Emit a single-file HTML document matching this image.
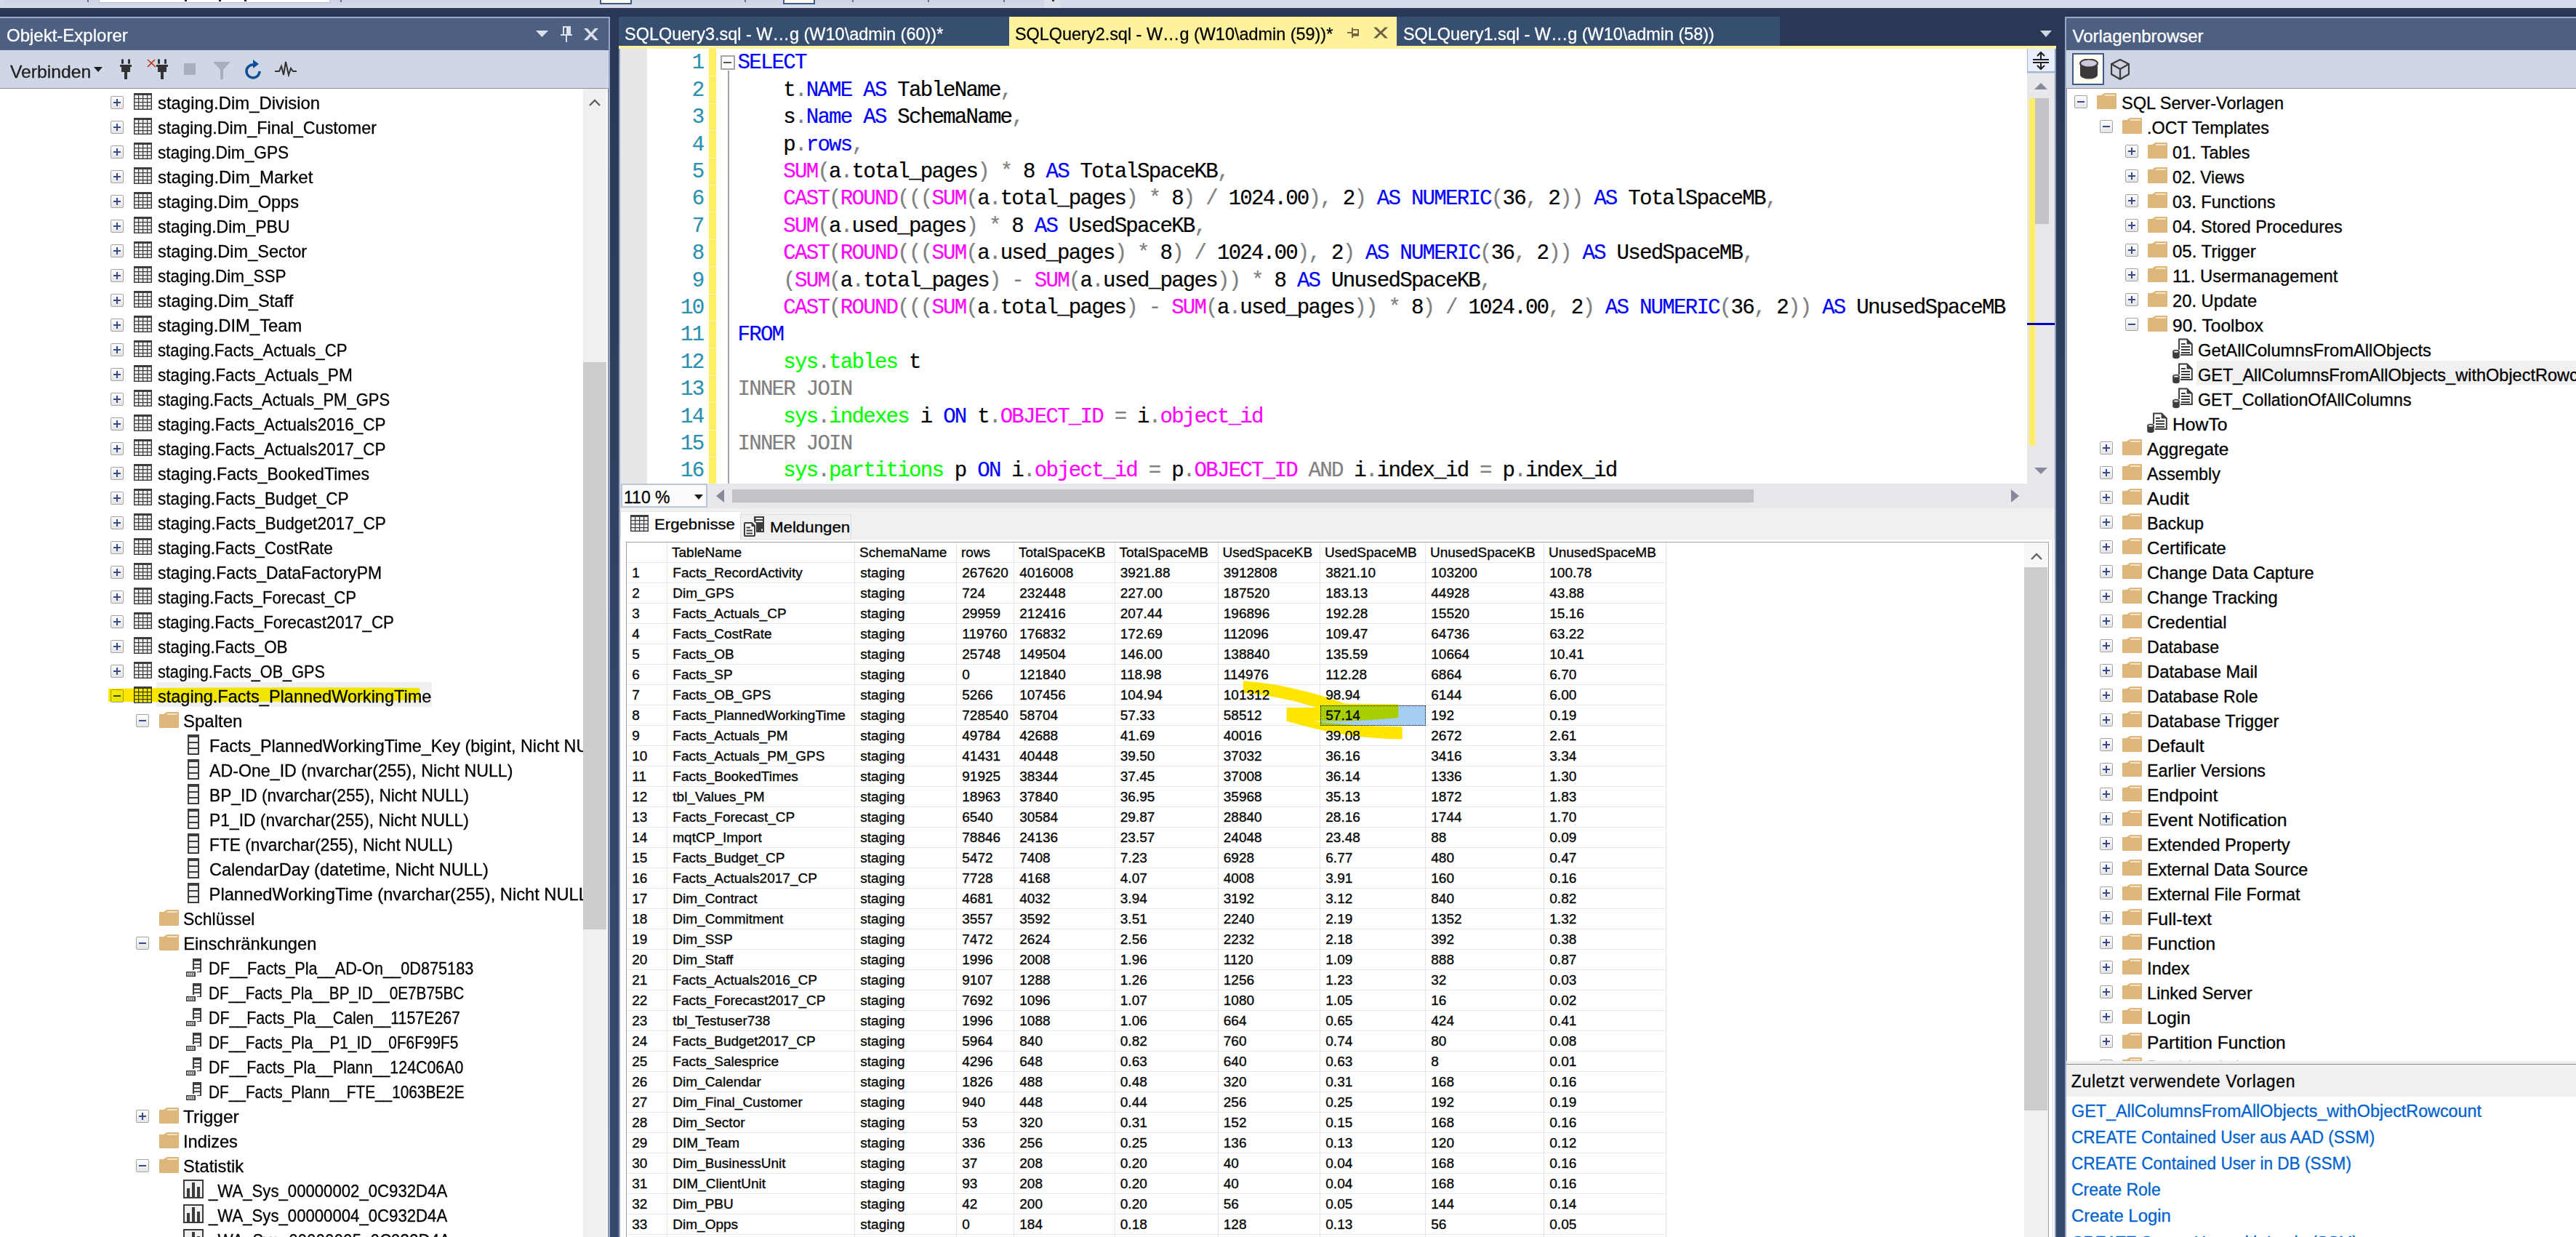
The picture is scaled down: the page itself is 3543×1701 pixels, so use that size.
<!DOCTYPE html><html><head><meta charset="utf-8"><style>
html,body{margin:0;padding:0;}
html,body{width:3543px;height:1701px;overflow:hidden;background:#293955;}
#root{position:relative;left:0;top:0;width:3543px;height:1701px;overflow:hidden;background:#293955;}
div,svg{position:absolute;}
.S{font-family:"Liberation Sans",sans-serif;white-space:pre;-webkit-text-stroke:0.3px currentColor;}
.M{font-family:"Liberation Mono",monospace;white-space:pre;-webkit-text-stroke:0.2px currentColor;}
</style></head><body><div id="root">
<div style="left:0px;top:0px;width:3543px;height:11px;background:#d5dbe8;"></div>
<div style="left:6px;top:0px;width:1430px;height:7px;background:#cfd6e5;"></div>
<div style="left:1436px;top:0px;width:22px;height:11px;background:#dde1ea;"></div>
<div style="left:1447px;top:0px;width:3px;height:2px;background:#333333;"></div>
<div style="left:136px;top:0px;width:316px;height:3px;background:#ffffff;border:1px solid #b9c2d6;border-top:none;"></div>
<div style="left:254px;top:0px;width:3px;height:2px;background:#1e1e1e;"></div>
<div style="left:301px;top:0px;width:3px;height:2px;background:#1e1e1e;"></div>
<div style="left:336px;top:0px;width:3px;height:2px;background:#1e1e1e;"></div>
<div style="left:120px;top:0px;width:2px;height:3px;background:#6d7486;"></div>
<div style="left:468px;top:0px;width:2px;height:3px;background:#6d7486;"></div>
<div style="left:1024px;top:0px;width:2px;height:3px;background:#6d7486;"></div>
<div style="left:1172px;top:0px;width:2px;height:3px;background:#6d7486;"></div>
<div style="left:1276px;top:0px;width:2px;height:3px;background:#6d7486;"></div>
<div style="left:1380px;top:0px;width:2px;height:3px;background:#6d7486;"></div>
<div style="left:825px;top:0px;width:40px;height:4px;background:#fffcf4;border:2px solid #3d5a8a;border-top:none;"></div>
<div style="left:1077px;top:0px;width:40px;height:4px;background:#fffcf4;border:2px solid #3d5a8a;border-top:none;"></div>
<div style="left:0px;top:23px;width:839px;height:1678px;background:#9aa6c8;"></div>
<div style="left:0px;top:25px;width:837px;height:44px;background:#4d6082;"></div>
<div class="S " style="left:9.0px;top:36.3px;font-size:24px;line-height:26.81px;color:#ffffff;">Objekt-Explorer</div>
<svg style="left:737px;top:42px;" width="17" height="9" viewBox="0 0 17 9"><path d="M0 0H17L8.5 9Z" fill="#dde1ea"/></svg>
<svg style="left:771px;top:35px;" width="16" height="24" viewBox="0 0 16 24"><path d="M3 1H14V13H3Z M5 3V12H8V3Z" fill="#dde1ea" fill-rule="evenodd"/><rect x="0" y="12" width="16" height="2" fill="#dde1ea"/><rect x="7" y="13" width="2" height="10" fill="#dde1ea"/></svg>
<svg style="left:802px;top:38px;" width="22" height="18" viewBox="0 0 22 18"><path d="M1 1H6L11 7L16 1H21L13.5 9L21 17.3H16L11 11.5L6 17.3H1L8.5 9Z" fill="#dde1ea"/></svg>
<div style="left:0px;top:69px;width:837px;height:52px;background:#cfd6e5;"></div>
<div class="S " style="left:14.0px;top:85.6px;font-size:24px;line-height:26.81px;color:#1e1e1e;transform:scaleX(1.03);transform-origin:0 0;">Verbinden</div>
<svg style="left:129px;top:92px;" width="12" height="8" viewBox="0 0 12 8"><path d="M0 0H12L6 7Z" fill="#1e1e1e"/></svg>
<svg style="left:165px;top:81px;" width="16" height="28" viewBox="0 0 16 28"><rect x="2" y="0" width="3" height="7" rx="1.5" fill="#333"/><rect x="11" y="0" width="3" height="7" rx="1.5" fill="#333"/><rect x="0" y="8" width="16" height="3" fill="#333"/><rect x="2" y="10" width="12" height="8" fill="#333"/><rect x="6" y="17" width="4" height="11" fill="#333"/></svg>
<svg style="left:202px;top:81px;" width="29" height="28" viewBox="0 0 29 28"><path d="M1 11L11 1M1 1L12 11" stroke="#c0300a" stroke-width="1.6"/><g transform="translate(13,0)"><rect x="2" y="0" width="3" height="7" rx="1.5" fill="#333"/><rect x="11" y="0" width="3" height="7" rx="1.5" fill="#333"/><rect x="0" y="8" width="16" height="3" fill="#333"/><rect x="2" y="10" width="12" height="8" fill="#333"/><rect x="6" y="17" width="4" height="11" fill="#333"/></g></svg>
<div style="left:253px;top:87px;width:16px;height:16px;background:#a8aebb;"></div>
<svg style="left:293px;top:85px;" width="24" height="24" viewBox="0 0 24 24"><path d="M0 0H24L14 11V24H10V11Z" fill="#a8aebb"/></svg>
<svg style="left:336px;top:81px;" width="26" height="29" viewBox="0 0 26 29"><path d="M21 17A9 9 0 1 1 13 8" fill="none" stroke="#0e4f96" stroke-width="3.6"/><path d="M12 1L20 7L12 13Z" fill="#0e4f96"/></svg>
<svg style="left:378px;top:84px;" width="30" height="22" viewBox="0 0 30 22"><path d="M0 14H6L9 7L12 19L15 1L19 19L22 10L25 14H30" fill="none" stroke="#333" stroke-width="2"/></svg>
<div style="left:0px;top:121px;width:837px;height:1px;background:#8c8f99;"></div>
<div style="left:0px;top:122px;width:802px;height:1579px;background:#ffffff;"></div>
<div style="left:802px;top:122px;width:33px;height:1579px;background:#f0f0f0;"></div>
<div style="left:803px;top:498px;width:31px;height:780px;background:#cdcdcd;"></div>
<svg style="left:810px;top:135px;" width="16" height="10" viewBox="0 0 16 10"><path d="M1 9L8 2L15 9" fill="none" stroke="#606060" stroke-width="2.4"/></svg>
<div style="left:152px;top:132px;width:16px;height:16px;border:1px solid #a3a3a3;border-radius:2px;background:linear-gradient(#fdfdfd,#e4e4e4);"></div>
<div style="left:156px;top:140px;width:10px;height:2px;background:#36498c;"></div>
<div style="left:160px;top:136px;width:2px;height:10px;background:#36498c;"></div>
<svg style="left:184px;top:128px;" width="25" height="23" viewBox="0 0 25 23"><rect x="0.7" y="0.7" width="23.6" height="21.6" fill="#f0f0f0" stroke="#3c3c3c" stroke-width="1.4"/><rect x="0" y="0" width="25" height="3" fill="#3c3c3c"/><rect x="6" y="2" width="1.2" height="21" fill="#3c3c3c"/><rect x="12" y="2" width="1.2" height="21" fill="#3c3c3c"/><rect x="18" y="2" width="1.2" height="21" fill="#3c3c3c"/><rect x="0" y="7" width="25" height="1.2" fill="#3c3c3c"/><rect x="0" y="12" width="25" height="1.2" fill="#3c3c3c"/><rect x="0" y="17" width="25" height="1.2" fill="#3c3c3c"/></svg>
<div class="S " style="left:217.3px;top:129.2px;font-size:23.7px;line-height:26.47px;color:#000000;transform:scaleX(1.0087);transform-origin:0 0;">staging.Dim_Division</div>
<div style="left:152px;top:166px;width:16px;height:16px;border:1px solid #a3a3a3;border-radius:2px;background:linear-gradient(#fdfdfd,#e4e4e4);"></div>
<div style="left:156px;top:174px;width:10px;height:2px;background:#36498c;"></div>
<div style="left:160px;top:170px;width:2px;height:10px;background:#36498c;"></div>
<svg style="left:184px;top:162px;" width="25" height="23" viewBox="0 0 25 23"><rect x="0.7" y="0.7" width="23.6" height="21.6" fill="#f0f0f0" stroke="#3c3c3c" stroke-width="1.4"/><rect x="0" y="0" width="25" height="3" fill="#3c3c3c"/><rect x="6" y="2" width="1.2" height="21" fill="#3c3c3c"/><rect x="12" y="2" width="1.2" height="21" fill="#3c3c3c"/><rect x="18" y="2" width="1.2" height="21" fill="#3c3c3c"/><rect x="0" y="7" width="25" height="1.2" fill="#3c3c3c"/><rect x="0" y="12" width="25" height="1.2" fill="#3c3c3c"/><rect x="0" y="17" width="25" height="1.2" fill="#3c3c3c"/></svg>
<div class="S " style="left:217.3px;top:163.2px;font-size:23.7px;line-height:26.47px;color:#000000;transform:scaleX(0.9855);transform-origin:0 0;">staging.Dim_Final_Customer</div>
<div style="left:152px;top:200px;width:16px;height:16px;border:1px solid #a3a3a3;border-radius:2px;background:linear-gradient(#fdfdfd,#e4e4e4);"></div>
<div style="left:156px;top:208px;width:10px;height:2px;background:#36498c;"></div>
<div style="left:160px;top:204px;width:2px;height:10px;background:#36498c;"></div>
<svg style="left:184px;top:196px;" width="25" height="23" viewBox="0 0 25 23"><rect x="0.7" y="0.7" width="23.6" height="21.6" fill="#f0f0f0" stroke="#3c3c3c" stroke-width="1.4"/><rect x="0" y="0" width="25" height="3" fill="#3c3c3c"/><rect x="6" y="2" width="1.2" height="21" fill="#3c3c3c"/><rect x="12" y="2" width="1.2" height="21" fill="#3c3c3c"/><rect x="18" y="2" width="1.2" height="21" fill="#3c3c3c"/><rect x="0" y="7" width="25" height="1.2" fill="#3c3c3c"/><rect x="0" y="12" width="25" height="1.2" fill="#3c3c3c"/><rect x="0" y="17" width="25" height="1.2" fill="#3c3c3c"/></svg>
<div class="S " style="left:217.3px;top:197.2px;font-size:23.7px;line-height:26.47px;color:#000000;transform:scaleX(0.9568);transform-origin:0 0;">staging.Dim_GPS</div>
<div style="left:152px;top:234px;width:16px;height:16px;border:1px solid #a3a3a3;border-radius:2px;background:linear-gradient(#fdfdfd,#e4e4e4);"></div>
<div style="left:156px;top:242px;width:10px;height:2px;background:#36498c;"></div>
<div style="left:160px;top:238px;width:2px;height:10px;background:#36498c;"></div>
<svg style="left:184px;top:230px;" width="25" height="23" viewBox="0 0 25 23"><rect x="0.7" y="0.7" width="23.6" height="21.6" fill="#f0f0f0" stroke="#3c3c3c" stroke-width="1.4"/><rect x="0" y="0" width="25" height="3" fill="#3c3c3c"/><rect x="6" y="2" width="1.2" height="21" fill="#3c3c3c"/><rect x="12" y="2" width="1.2" height="21" fill="#3c3c3c"/><rect x="18" y="2" width="1.2" height="21" fill="#3c3c3c"/><rect x="0" y="7" width="25" height="1.2" fill="#3c3c3c"/><rect x="0" y="12" width="25" height="1.2" fill="#3c3c3c"/><rect x="0" y="17" width="25" height="1.2" fill="#3c3c3c"/></svg>
<div class="S " style="left:217.3px;top:231.2px;font-size:23.7px;line-height:26.47px;color:#000000;transform:scaleX(1.013);transform-origin:0 0;">staging.Dim_Market</div>
<div style="left:152px;top:268px;width:16px;height:16px;border:1px solid #a3a3a3;border-radius:2px;background:linear-gradient(#fdfdfd,#e4e4e4);"></div>
<div style="left:156px;top:276px;width:10px;height:2px;background:#36498c;"></div>
<div style="left:160px;top:272px;width:2px;height:10px;background:#36498c;"></div>
<svg style="left:184px;top:264px;" width="25" height="23" viewBox="0 0 25 23"><rect x="0.7" y="0.7" width="23.6" height="21.6" fill="#f0f0f0" stroke="#3c3c3c" stroke-width="1.4"/><rect x="0" y="0" width="25" height="3" fill="#3c3c3c"/><rect x="6" y="2" width="1.2" height="21" fill="#3c3c3c"/><rect x="12" y="2" width="1.2" height="21" fill="#3c3c3c"/><rect x="18" y="2" width="1.2" height="21" fill="#3c3c3c"/><rect x="0" y="7" width="25" height="1.2" fill="#3c3c3c"/><rect x="0" y="12" width="25" height="1.2" fill="#3c3c3c"/><rect x="0" y="17" width="25" height="1.2" fill="#3c3c3c"/></svg>
<div class="S " style="left:217.3px;top:265.2px;font-size:23.7px;line-height:26.47px;color:#000000;transform:scaleX(0.9964);transform-origin:0 0;">staging.Dim_Opps</div>
<div style="left:152px;top:302px;width:16px;height:16px;border:1px solid #a3a3a3;border-radius:2px;background:linear-gradient(#fdfdfd,#e4e4e4);"></div>
<div style="left:156px;top:310px;width:10px;height:2px;background:#36498c;"></div>
<div style="left:160px;top:306px;width:2px;height:10px;background:#36498c;"></div>
<svg style="left:184px;top:298px;" width="25" height="23" viewBox="0 0 25 23"><rect x="0.7" y="0.7" width="23.6" height="21.6" fill="#f0f0f0" stroke="#3c3c3c" stroke-width="1.4"/><rect x="0" y="0" width="25" height="3" fill="#3c3c3c"/><rect x="6" y="2" width="1.2" height="21" fill="#3c3c3c"/><rect x="12" y="2" width="1.2" height="21" fill="#3c3c3c"/><rect x="18" y="2" width="1.2" height="21" fill="#3c3c3c"/><rect x="0" y="7" width="25" height="1.2" fill="#3c3c3c"/><rect x="0" y="12" width="25" height="1.2" fill="#3c3c3c"/><rect x="0" y="17" width="25" height="1.2" fill="#3c3c3c"/></svg>
<div class="S " style="left:217.3px;top:299.2px;font-size:23.7px;line-height:26.47px;color:#000000;transform:scaleX(0.971);transform-origin:0 0;">staging.Dim_PBU</div>
<div style="left:152px;top:336px;width:16px;height:16px;border:1px solid #a3a3a3;border-radius:2px;background:linear-gradient(#fdfdfd,#e4e4e4);"></div>
<div style="left:156px;top:344px;width:10px;height:2px;background:#36498c;"></div>
<div style="left:160px;top:340px;width:2px;height:10px;background:#36498c;"></div>
<svg style="left:184px;top:332px;" width="25" height="23" viewBox="0 0 25 23"><rect x="0.7" y="0.7" width="23.6" height="21.6" fill="#f0f0f0" stroke="#3c3c3c" stroke-width="1.4"/><rect x="0" y="0" width="25" height="3" fill="#3c3c3c"/><rect x="6" y="2" width="1.2" height="21" fill="#3c3c3c"/><rect x="12" y="2" width="1.2" height="21" fill="#3c3c3c"/><rect x="18" y="2" width="1.2" height="21" fill="#3c3c3c"/><rect x="0" y="7" width="25" height="1.2" fill="#3c3c3c"/><rect x="0" y="12" width="25" height="1.2" fill="#3c3c3c"/><rect x="0" y="17" width="25" height="1.2" fill="#3c3c3c"/></svg>
<div class="S " style="left:217.3px;top:333.2px;font-size:23.7px;line-height:26.47px;color:#000000;transform:scaleX(0.9926);transform-origin:0 0;">staging.Dim_Sector</div>
<div style="left:152px;top:370px;width:16px;height:16px;border:1px solid #a3a3a3;border-radius:2px;background:linear-gradient(#fdfdfd,#e4e4e4);"></div>
<div style="left:156px;top:378px;width:10px;height:2px;background:#36498c;"></div>
<div style="left:160px;top:374px;width:2px;height:10px;background:#36498c;"></div>
<svg style="left:184px;top:366px;" width="25" height="23" viewBox="0 0 25 23"><rect x="0.7" y="0.7" width="23.6" height="21.6" fill="#f0f0f0" stroke="#3c3c3c" stroke-width="1.4"/><rect x="0" y="0" width="25" height="3" fill="#3c3c3c"/><rect x="6" y="2" width="1.2" height="21" fill="#3c3c3c"/><rect x="12" y="2" width="1.2" height="21" fill="#3c3c3c"/><rect x="18" y="2" width="1.2" height="21" fill="#3c3c3c"/><rect x="0" y="7" width="25" height="1.2" fill="#3c3c3c"/><rect x="0" y="12" width="25" height="1.2" fill="#3c3c3c"/><rect x="0" y="17" width="25" height="1.2" fill="#3c3c3c"/></svg>
<div class="S " style="left:217.3px;top:367.2px;font-size:23.7px;line-height:26.47px;color:#000000;transform:scaleX(0.9508);transform-origin:0 0;">staging.Dim_SSP</div>
<div style="left:152px;top:404px;width:16px;height:16px;border:1px solid #a3a3a3;border-radius:2px;background:linear-gradient(#fdfdfd,#e4e4e4);"></div>
<div style="left:156px;top:412px;width:10px;height:2px;background:#36498c;"></div>
<div style="left:160px;top:408px;width:2px;height:10px;background:#36498c;"></div>
<svg style="left:184px;top:400px;" width="25" height="23" viewBox="0 0 25 23"><rect x="0.7" y="0.7" width="23.6" height="21.6" fill="#f0f0f0" stroke="#3c3c3c" stroke-width="1.4"/><rect x="0" y="0" width="25" height="3" fill="#3c3c3c"/><rect x="6" y="2" width="1.2" height="21" fill="#3c3c3c"/><rect x="12" y="2" width="1.2" height="21" fill="#3c3c3c"/><rect x="18" y="2" width="1.2" height="21" fill="#3c3c3c"/><rect x="0" y="7" width="25" height="1.2" fill="#3c3c3c"/><rect x="0" y="12" width="25" height="1.2" fill="#3c3c3c"/><rect x="0" y="17" width="25" height="1.2" fill="#3c3c3c"/></svg>
<div class="S " style="left:217.3px;top:401.2px;font-size:23.7px;line-height:26.47px;color:#000000;transform:scaleX(0.9984);transform-origin:0 0;">staging.Dim_Staff</div>
<div style="left:152px;top:438px;width:16px;height:16px;border:1px solid #a3a3a3;border-radius:2px;background:linear-gradient(#fdfdfd,#e4e4e4);"></div>
<div style="left:156px;top:446px;width:10px;height:2px;background:#36498c;"></div>
<div style="left:160px;top:442px;width:2px;height:10px;background:#36498c;"></div>
<svg style="left:184px;top:434px;" width="25" height="23" viewBox="0 0 25 23"><rect x="0.7" y="0.7" width="23.6" height="21.6" fill="#f0f0f0" stroke="#3c3c3c" stroke-width="1.4"/><rect x="0" y="0" width="25" height="3" fill="#3c3c3c"/><rect x="6" y="2" width="1.2" height="21" fill="#3c3c3c"/><rect x="12" y="2" width="1.2" height="21" fill="#3c3c3c"/><rect x="18" y="2" width="1.2" height="21" fill="#3c3c3c"/><rect x="0" y="7" width="25" height="1.2" fill="#3c3c3c"/><rect x="0" y="12" width="25" height="1.2" fill="#3c3c3c"/><rect x="0" y="17" width="25" height="1.2" fill="#3c3c3c"/></svg>
<div class="S " style="left:217.3px;top:435.2px;font-size:23.7px;line-height:26.47px;color:#000000;transform:scaleX(1.0041);transform-origin:0 0;">staging.DIM_Team</div>
<div style="left:152px;top:472px;width:16px;height:16px;border:1px solid #a3a3a3;border-radius:2px;background:linear-gradient(#fdfdfd,#e4e4e4);"></div>
<div style="left:156px;top:480px;width:10px;height:2px;background:#36498c;"></div>
<div style="left:160px;top:476px;width:2px;height:10px;background:#36498c;"></div>
<svg style="left:184px;top:468px;" width="25" height="23" viewBox="0 0 25 23"><rect x="0.7" y="0.7" width="23.6" height="21.6" fill="#f0f0f0" stroke="#3c3c3c" stroke-width="1.4"/><rect x="0" y="0" width="25" height="3" fill="#3c3c3c"/><rect x="6" y="2" width="1.2" height="21" fill="#3c3c3c"/><rect x="12" y="2" width="1.2" height="21" fill="#3c3c3c"/><rect x="18" y="2" width="1.2" height="21" fill="#3c3c3c"/><rect x="0" y="7" width="25" height="1.2" fill="#3c3c3c"/><rect x="0" y="12" width="25" height="1.2" fill="#3c3c3c"/><rect x="0" y="17" width="25" height="1.2" fill="#3c3c3c"/></svg>
<div class="S " style="left:217.3px;top:469.2px;font-size:23.7px;line-height:26.47px;color:#000000;transform:scaleX(0.9378);transform-origin:0 0;">staging.Facts_Actuals_CP</div>
<div style="left:152px;top:506px;width:16px;height:16px;border:1px solid #a3a3a3;border-radius:2px;background:linear-gradient(#fdfdfd,#e4e4e4);"></div>
<div style="left:156px;top:514px;width:10px;height:2px;background:#36498c;"></div>
<div style="left:160px;top:510px;width:2px;height:10px;background:#36498c;"></div>
<svg style="left:184px;top:502px;" width="25" height="23" viewBox="0 0 25 23"><rect x="0.7" y="0.7" width="23.6" height="21.6" fill="#f0f0f0" stroke="#3c3c3c" stroke-width="1.4"/><rect x="0" y="0" width="25" height="3" fill="#3c3c3c"/><rect x="6" y="2" width="1.2" height="21" fill="#3c3c3c"/><rect x="12" y="2" width="1.2" height="21" fill="#3c3c3c"/><rect x="18" y="2" width="1.2" height="21" fill="#3c3c3c"/><rect x="0" y="7" width="25" height="1.2" fill="#3c3c3c"/><rect x="0" y="12" width="25" height="1.2" fill="#3c3c3c"/><rect x="0" y="17" width="25" height="1.2" fill="#3c3c3c"/></svg>
<div class="S " style="left:217.3px;top:503.2px;font-size:23.7px;line-height:26.47px;color:#000000;transform:scaleX(0.9549);transform-origin:0 0;">staging.Facts_Actuals_PM</div>
<div style="left:152px;top:540px;width:16px;height:16px;border:1px solid #a3a3a3;border-radius:2px;background:linear-gradient(#fdfdfd,#e4e4e4);"></div>
<div style="left:156px;top:548px;width:10px;height:2px;background:#36498c;"></div>
<div style="left:160px;top:544px;width:2px;height:10px;background:#36498c;"></div>
<svg style="left:184px;top:536px;" width="25" height="23" viewBox="0 0 25 23"><rect x="0.7" y="0.7" width="23.6" height="21.6" fill="#f0f0f0" stroke="#3c3c3c" stroke-width="1.4"/><rect x="0" y="0" width="25" height="3" fill="#3c3c3c"/><rect x="6" y="2" width="1.2" height="21" fill="#3c3c3c"/><rect x="12" y="2" width="1.2" height="21" fill="#3c3c3c"/><rect x="18" y="2" width="1.2" height="21" fill="#3c3c3c"/><rect x="0" y="7" width="25" height="1.2" fill="#3c3c3c"/><rect x="0" y="12" width="25" height="1.2" fill="#3c3c3c"/><rect x="0" y="17" width="25" height="1.2" fill="#3c3c3c"/></svg>
<div class="S " style="left:217.3px;top:537.2px;font-size:23.7px;line-height:26.47px;color:#000000;transform:scaleX(0.9287);transform-origin:0 0;">staging.Facts_Actuals_PM_GPS</div>
<div style="left:152px;top:574px;width:16px;height:16px;border:1px solid #a3a3a3;border-radius:2px;background:linear-gradient(#fdfdfd,#e4e4e4);"></div>
<div style="left:156px;top:582px;width:10px;height:2px;background:#36498c;"></div>
<div style="left:160px;top:578px;width:2px;height:10px;background:#36498c;"></div>
<svg style="left:184px;top:570px;" width="25" height="23" viewBox="0 0 25 23"><rect x="0.7" y="0.7" width="23.6" height="21.6" fill="#f0f0f0" stroke="#3c3c3c" stroke-width="1.4"/><rect x="0" y="0" width="25" height="3" fill="#3c3c3c"/><rect x="6" y="2" width="1.2" height="21" fill="#3c3c3c"/><rect x="12" y="2" width="1.2" height="21" fill="#3c3c3c"/><rect x="18" y="2" width="1.2" height="21" fill="#3c3c3c"/><rect x="0" y="7" width="25" height="1.2" fill="#3c3c3c"/><rect x="0" y="12" width="25" height="1.2" fill="#3c3c3c"/><rect x="0" y="17" width="25" height="1.2" fill="#3c3c3c"/></svg>
<div class="S " style="left:217.3px;top:571.2px;font-size:23.7px;line-height:26.47px;color:#000000;transform:scaleX(0.9483);transform-origin:0 0;">staging.Facts_Actuals2016_CP</div>
<div style="left:152px;top:608px;width:16px;height:16px;border:1px solid #a3a3a3;border-radius:2px;background:linear-gradient(#fdfdfd,#e4e4e4);"></div>
<div style="left:156px;top:616px;width:10px;height:2px;background:#36498c;"></div>
<div style="left:160px;top:612px;width:2px;height:10px;background:#36498c;"></div>
<svg style="left:184px;top:604px;" width="25" height="23" viewBox="0 0 25 23"><rect x="0.7" y="0.7" width="23.6" height="21.6" fill="#f0f0f0" stroke="#3c3c3c" stroke-width="1.4"/><rect x="0" y="0" width="25" height="3" fill="#3c3c3c"/><rect x="6" y="2" width="1.2" height="21" fill="#3c3c3c"/><rect x="12" y="2" width="1.2" height="21" fill="#3c3c3c"/><rect x="18" y="2" width="1.2" height="21" fill="#3c3c3c"/><rect x="0" y="7" width="25" height="1.2" fill="#3c3c3c"/><rect x="0" y="12" width="25" height="1.2" fill="#3c3c3c"/><rect x="0" y="17" width="25" height="1.2" fill="#3c3c3c"/></svg>
<div class="S " style="left:217.3px;top:605.2px;font-size:23.7px;line-height:26.47px;color:#000000;transform:scaleX(0.9483);transform-origin:0 0;">staging.Facts_Actuals2017_CP</div>
<div style="left:152px;top:642px;width:16px;height:16px;border:1px solid #a3a3a3;border-radius:2px;background:linear-gradient(#fdfdfd,#e4e4e4);"></div>
<div style="left:156px;top:650px;width:10px;height:2px;background:#36498c;"></div>
<div style="left:160px;top:646px;width:2px;height:10px;background:#36498c;"></div>
<svg style="left:184px;top:638px;" width="25" height="23" viewBox="0 0 25 23"><rect x="0.7" y="0.7" width="23.6" height="21.6" fill="#f0f0f0" stroke="#3c3c3c" stroke-width="1.4"/><rect x="0" y="0" width="25" height="3" fill="#3c3c3c"/><rect x="6" y="2" width="1.2" height="21" fill="#3c3c3c"/><rect x="12" y="2" width="1.2" height="21" fill="#3c3c3c"/><rect x="18" y="2" width="1.2" height="21" fill="#3c3c3c"/><rect x="0" y="7" width="25" height="1.2" fill="#3c3c3c"/><rect x="0" y="12" width="25" height="1.2" fill="#3c3c3c"/><rect x="0" y="17" width="25" height="1.2" fill="#3c3c3c"/></svg>
<div class="S " style="left:217.3px;top:639.2px;font-size:23.7px;line-height:26.47px;color:#000000;transform:scaleX(0.9766);transform-origin:0 0;">staging.Facts_BookedTimes</div>
<div style="left:152px;top:676px;width:16px;height:16px;border:1px solid #a3a3a3;border-radius:2px;background:linear-gradient(#fdfdfd,#e4e4e4);"></div>
<div style="left:156px;top:684px;width:10px;height:2px;background:#36498c;"></div>
<div style="left:160px;top:680px;width:2px;height:10px;background:#36498c;"></div>
<svg style="left:184px;top:672px;" width="25" height="23" viewBox="0 0 25 23"><rect x="0.7" y="0.7" width="23.6" height="21.6" fill="#f0f0f0" stroke="#3c3c3c" stroke-width="1.4"/><rect x="0" y="0" width="25" height="3" fill="#3c3c3c"/><rect x="6" y="2" width="1.2" height="21" fill="#3c3c3c"/><rect x="12" y="2" width="1.2" height="21" fill="#3c3c3c"/><rect x="18" y="2" width="1.2" height="21" fill="#3c3c3c"/><rect x="0" y="7" width="25" height="1.2" fill="#3c3c3c"/><rect x="0" y="12" width="25" height="1.2" fill="#3c3c3c"/><rect x="0" y="17" width="25" height="1.2" fill="#3c3c3c"/></svg>
<div class="S " style="left:217.3px;top:673.2px;font-size:23.7px;line-height:26.47px;color:#000000;transform:scaleX(0.954);transform-origin:0 0;">staging.Facts_Budget_CP</div>
<div style="left:152px;top:710px;width:16px;height:16px;border:1px solid #a3a3a3;border-radius:2px;background:linear-gradient(#fdfdfd,#e4e4e4);"></div>
<div style="left:156px;top:718px;width:10px;height:2px;background:#36498c;"></div>
<div style="left:160px;top:714px;width:2px;height:10px;background:#36498c;"></div>
<svg style="left:184px;top:706px;" width="25" height="23" viewBox="0 0 25 23"><rect x="0.7" y="0.7" width="23.6" height="21.6" fill="#f0f0f0" stroke="#3c3c3c" stroke-width="1.4"/><rect x="0" y="0" width="25" height="3" fill="#3c3c3c"/><rect x="6" y="2" width="1.2" height="21" fill="#3c3c3c"/><rect x="12" y="2" width="1.2" height="21" fill="#3c3c3c"/><rect x="18" y="2" width="1.2" height="21" fill="#3c3c3c"/><rect x="0" y="7" width="25" height="1.2" fill="#3c3c3c"/><rect x="0" y="12" width="25" height="1.2" fill="#3c3c3c"/><rect x="0" y="17" width="25" height="1.2" fill="#3c3c3c"/></svg>
<div class="S " style="left:217.3px;top:707.2px;font-size:23.7px;line-height:26.47px;color:#000000;transform:scaleX(0.9575);transform-origin:0 0;">staging.Facts_Budget2017_CP</div>
<div style="left:152px;top:744px;width:16px;height:16px;border:1px solid #a3a3a3;border-radius:2px;background:linear-gradient(#fdfdfd,#e4e4e4);"></div>
<div style="left:156px;top:752px;width:10px;height:2px;background:#36498c;"></div>
<div style="left:160px;top:748px;width:2px;height:10px;background:#36498c;"></div>
<svg style="left:184px;top:740px;" width="25" height="23" viewBox="0 0 25 23"><rect x="0.7" y="0.7" width="23.6" height="21.6" fill="#f0f0f0" stroke="#3c3c3c" stroke-width="1.4"/><rect x="0" y="0" width="25" height="3" fill="#3c3c3c"/><rect x="6" y="2" width="1.2" height="21" fill="#3c3c3c"/><rect x="12" y="2" width="1.2" height="21" fill="#3c3c3c"/><rect x="18" y="2" width="1.2" height="21" fill="#3c3c3c"/><rect x="0" y="7" width="25" height="1.2" fill="#3c3c3c"/><rect x="0" y="12" width="25" height="1.2" fill="#3c3c3c"/><rect x="0" y="17" width="25" height="1.2" fill="#3c3c3c"/></svg>
<div class="S " style="left:217.3px;top:741.2px;font-size:23.7px;line-height:26.47px;color:#000000;transform:scaleX(0.9528);transform-origin:0 0;">staging.Facts_CostRate</div>
<div style="left:152px;top:778px;width:16px;height:16px;border:1px solid #a3a3a3;border-radius:2px;background:linear-gradient(#fdfdfd,#e4e4e4);"></div>
<div style="left:156px;top:786px;width:10px;height:2px;background:#36498c;"></div>
<div style="left:160px;top:782px;width:2px;height:10px;background:#36498c;"></div>
<svg style="left:184px;top:774px;" width="25" height="23" viewBox="0 0 25 23"><rect x="0.7" y="0.7" width="23.6" height="21.6" fill="#f0f0f0" stroke="#3c3c3c" stroke-width="1.4"/><rect x="0" y="0" width="25" height="3" fill="#3c3c3c"/><rect x="6" y="2" width="1.2" height="21" fill="#3c3c3c"/><rect x="12" y="2" width="1.2" height="21" fill="#3c3c3c"/><rect x="18" y="2" width="1.2" height="21" fill="#3c3c3c"/><rect x="0" y="7" width="25" height="1.2" fill="#3c3c3c"/><rect x="0" y="12" width="25" height="1.2" fill="#3c3c3c"/><rect x="0" y="17" width="25" height="1.2" fill="#3c3c3c"/></svg>
<div class="S " style="left:217.3px;top:775.2px;font-size:23.7px;line-height:26.47px;color:#000000;transform:scaleX(0.967);transform-origin:0 0;">staging.Facts_DataFactoryPM</div>
<div style="left:152px;top:812px;width:16px;height:16px;border:1px solid #a3a3a3;border-radius:2px;background:linear-gradient(#fdfdfd,#e4e4e4);"></div>
<div style="left:156px;top:820px;width:10px;height:2px;background:#36498c;"></div>
<div style="left:160px;top:816px;width:2px;height:10px;background:#36498c;"></div>
<svg style="left:184px;top:808px;" width="25" height="23" viewBox="0 0 25 23"><rect x="0.7" y="0.7" width="23.6" height="21.6" fill="#f0f0f0" stroke="#3c3c3c" stroke-width="1.4"/><rect x="0" y="0" width="25" height="3" fill="#3c3c3c"/><rect x="6" y="2" width="1.2" height="21" fill="#3c3c3c"/><rect x="12" y="2" width="1.2" height="21" fill="#3c3c3c"/><rect x="18" y="2" width="1.2" height="21" fill="#3c3c3c"/><rect x="0" y="7" width="25" height="1.2" fill="#3c3c3c"/><rect x="0" y="12" width="25" height="1.2" fill="#3c3c3c"/><rect x="0" y="17" width="25" height="1.2" fill="#3c3c3c"/></svg>
<div class="S " style="left:217.3px;top:809.2px;font-size:23.7px;line-height:26.47px;color:#000000;transform:scaleX(0.9343);transform-origin:0 0;">staging.Facts_Forecast_CP</div>
<div style="left:152px;top:846px;width:16px;height:16px;border:1px solid #a3a3a3;border-radius:2px;background:linear-gradient(#fdfdfd,#e4e4e4);"></div>
<div style="left:156px;top:854px;width:10px;height:2px;background:#36498c;"></div>
<div style="left:160px;top:850px;width:2px;height:10px;background:#36498c;"></div>
<svg style="left:184px;top:842px;" width="25" height="23" viewBox="0 0 25 23"><rect x="0.7" y="0.7" width="23.6" height="21.6" fill="#f0f0f0" stroke="#3c3c3c" stroke-width="1.4"/><rect x="0" y="0" width="25" height="3" fill="#3c3c3c"/><rect x="6" y="2" width="1.2" height="21" fill="#3c3c3c"/><rect x="12" y="2" width="1.2" height="21" fill="#3c3c3c"/><rect x="18" y="2" width="1.2" height="21" fill="#3c3c3c"/><rect x="0" y="7" width="25" height="1.2" fill="#3c3c3c"/><rect x="0" y="12" width="25" height="1.2" fill="#3c3c3c"/><rect x="0" y="17" width="25" height="1.2" fill="#3c3c3c"/></svg>
<div class="S " style="left:217.3px;top:843.2px;font-size:23.7px;line-height:26.47px;color:#000000;transform:scaleX(0.9421);transform-origin:0 0;">staging.Facts_Forecast2017_CP</div>
<div style="left:152px;top:880px;width:16px;height:16px;border:1px solid #a3a3a3;border-radius:2px;background:linear-gradient(#fdfdfd,#e4e4e4);"></div>
<div style="left:156px;top:888px;width:10px;height:2px;background:#36498c;"></div>
<div style="left:160px;top:884px;width:2px;height:10px;background:#36498c;"></div>
<svg style="left:184px;top:876px;" width="25" height="23" viewBox="0 0 25 23"><rect x="0.7" y="0.7" width="23.6" height="21.6" fill="#f0f0f0" stroke="#3c3c3c" stroke-width="1.4"/><rect x="0" y="0" width="25" height="3" fill="#3c3c3c"/><rect x="6" y="2" width="1.2" height="21" fill="#3c3c3c"/><rect x="12" y="2" width="1.2" height="21" fill="#3c3c3c"/><rect x="18" y="2" width="1.2" height="21" fill="#3c3c3c"/><rect x="0" y="7" width="25" height="1.2" fill="#3c3c3c"/><rect x="0" y="12" width="25" height="1.2" fill="#3c3c3c"/><rect x="0" y="17" width="25" height="1.2" fill="#3c3c3c"/></svg>
<div class="S " style="left:217.3px;top:877.2px;font-size:23.7px;line-height:26.47px;color:#000000;transform:scaleX(0.9486);transform-origin:0 0;">staging.Facts_OB</div>
<div style="left:152px;top:914px;width:16px;height:16px;border:1px solid #a3a3a3;border-radius:2px;background:linear-gradient(#fdfdfd,#e4e4e4);"></div>
<div style="left:156px;top:922px;width:10px;height:2px;background:#36498c;"></div>
<div style="left:160px;top:918px;width:2px;height:10px;background:#36498c;"></div>
<svg style="left:184px;top:910px;" width="25" height="23" viewBox="0 0 25 23"><rect x="0.7" y="0.7" width="23.6" height="21.6" fill="#f0f0f0" stroke="#3c3c3c" stroke-width="1.4"/><rect x="0" y="0" width="25" height="3" fill="#3c3c3c"/><rect x="6" y="2" width="1.2" height="21" fill="#3c3c3c"/><rect x="12" y="2" width="1.2" height="21" fill="#3c3c3c"/><rect x="18" y="2" width="1.2" height="21" fill="#3c3c3c"/><rect x="0" y="7" width="25" height="1.2" fill="#3c3c3c"/><rect x="0" y="12" width="25" height="1.2" fill="#3c3c3c"/><rect x="0" y="17" width="25" height="1.2" fill="#3c3c3c"/></svg>
<div class="S " style="left:217.3px;top:911.2px;font-size:23.7px;line-height:26.47px;color:#000000;transform:scaleX(0.9141);transform-origin:0 0;">staging.Facts_OB_GPS</div>
<div style="left:215px;top:938px;width:379px;height:34px;background:#f0f0f0;"></div>
<div style="left:152px;top:948px;width:16px;height:16px;border:1px solid #a3a3a3;border-radius:2px;background:linear-gradient(#fdfdfd,#e4e4e4);"></div>
<div style="left:156px;top:956px;width:10px;height:2px;background:#36498c;"></div>
<svg style="left:184px;top:944px;" width="25" height="23" viewBox="0 0 25 23"><rect x="0.7" y="0.7" width="23.6" height="21.6" fill="#f0f0f0" stroke="#3c3c3c" stroke-width="1.4"/><rect x="0" y="0" width="25" height="3" fill="#3c3c3c"/><rect x="6" y="2" width="1.2" height="21" fill="#3c3c3c"/><rect x="12" y="2" width="1.2" height="21" fill="#3c3c3c"/><rect x="18" y="2" width="1.2" height="21" fill="#3c3c3c"/><rect x="0" y="7" width="25" height="1.2" fill="#3c3c3c"/><rect x="0" y="12" width="25" height="1.2" fill="#3c3c3c"/><rect x="0" y="17" width="25" height="1.2" fill="#3c3c3c"/></svg>
<div class="S " style="left:217.3px;top:945.2px;font-size:23.7px;line-height:26.47px;color:#000000;transform:scaleX(0.9926);transform-origin:0 0;">staging.Facts_PlannedWorkingTime</div>
<div style="left:187px;top:982px;width:16px;height:16px;border:1px solid #a3a3a3;border-radius:2px;background:linear-gradient(#fdfdfd,#e4e4e4);"></div>
<div style="left:191px;top:990px;width:10px;height:2px;background:#36498c;"></div>
<svg style="left:219px;top:979px;" width="27" height="22" viewBox="0 0 27 22"><path d="M0 4Q0 3 1 3H6L9 1Q10 0 11 0H26Q27 0 27 1V21Q27 22 26 22H1Q0 22 0 21Z" fill="#dcb67a"/><path d="M11 2H25V4H11Z" fill="#f3e3c4"/></svg>
<div class="S " style="left:252.3px;top:979.2px;font-size:23.7px;line-height:26.47px;color:#000000;transform:scaleX(1.0118);transform-origin:0 0;">Spalten</div>
<svg style="left:258px;top:1010px;" width="16" height="28" viewBox="0 0 16 28"><rect x="0" y="0" width="16" height="28" fill="#3c3c3c"/><rect x="2" y="4" width="12" height="6" fill="#f0f0f3"/><rect x="2" y="12" width="12" height="6" fill="#f0f0f3"/><rect x="2" y="20" width="12" height="6" fill="#f0f0f3"/></svg>
<div class="S " style="left:287.6px;top:1013.2px;font-size:23.7px;line-height:26.47px;color:#000000;transform:scaleX(0.985);transform-origin:0 0;">Facts_PlannedWorkingTime_Key (bigint, Nicht NULL)</div>
<svg style="left:258px;top:1044px;" width="16" height="28" viewBox="0 0 16 28"><rect x="0" y="0" width="16" height="28" fill="#3c3c3c"/><rect x="2" y="4" width="12" height="6" fill="#f0f0f3"/><rect x="2" y="12" width="12" height="6" fill="#f0f0f3"/><rect x="2" y="20" width="12" height="6" fill="#f0f0f3"/></svg>
<div class="S " style="left:287.6px;top:1047.2px;font-size:23.7px;line-height:26.47px;color:#000000;transform:scaleX(0.9788);transform-origin:0 0;">AD-One_ID (nvarchar(255), Nicht NULL)</div>
<svg style="left:258px;top:1078px;" width="16" height="28" viewBox="0 0 16 28"><rect x="0" y="0" width="16" height="28" fill="#3c3c3c"/><rect x="2" y="4" width="12" height="6" fill="#f0f0f3"/><rect x="2" y="12" width="12" height="6" fill="#f0f0f3"/><rect x="2" y="20" width="12" height="6" fill="#f0f0f3"/></svg>
<div class="S " style="left:287.6px;top:1081.2px;font-size:23.7px;line-height:26.47px;color:#000000;transform:scaleX(0.9584);transform-origin:0 0;">BP_ID (nvarchar(255), Nicht NULL)</div>
<svg style="left:258px;top:1112px;" width="16" height="28" viewBox="0 0 16 28"><rect x="0" y="0" width="16" height="28" fill="#3c3c3c"/><rect x="2" y="4" width="12" height="6" fill="#f0f0f3"/><rect x="2" y="12" width="12" height="6" fill="#f0f0f3"/><rect x="2" y="20" width="12" height="6" fill="#f0f0f3"/></svg>
<div class="S " style="left:287.6px;top:1115.2px;font-size:23.7px;line-height:26.47px;color:#000000;transform:scaleX(0.9649);transform-origin:0 0;">P1_ID (nvarchar(255), Nicht NULL)</div>
<svg style="left:258px;top:1146px;" width="16" height="28" viewBox="0 0 16 28"><rect x="0" y="0" width="16" height="28" fill="#3c3c3c"/><rect x="2" y="4" width="12" height="6" fill="#f0f0f3"/><rect x="2" y="12" width="12" height="6" fill="#f0f0f3"/><rect x="2" y="20" width="12" height="6" fill="#f0f0f3"/></svg>
<div class="S " style="left:287.6px;top:1149.2px;font-size:23.7px;line-height:26.47px;color:#000000;transform:scaleX(0.9596);transform-origin:0 0;">FTE (nvarchar(255), Nicht NULL)</div>
<svg style="left:258px;top:1180px;" width="16" height="28" viewBox="0 0 16 28"><rect x="0" y="0" width="16" height="28" fill="#3c3c3c"/><rect x="2" y="4" width="12" height="6" fill="#f0f0f3"/><rect x="2" y="12" width="12" height="6" fill="#f0f0f3"/><rect x="2" y="20" width="12" height="6" fill="#f0f0f3"/></svg>
<div class="S " style="left:287.6px;top:1183.2px;font-size:23.7px;line-height:26.47px;color:#000000;transform:scaleX(0.9948);transform-origin:0 0;">CalendarDay (datetime, Nicht NULL)</div>
<svg style="left:258px;top:1214px;" width="16" height="28" viewBox="0 0 16 28"><rect x="0" y="0" width="16" height="28" fill="#3c3c3c"/><rect x="2" y="4" width="12" height="6" fill="#f0f0f3"/><rect x="2" y="12" width="12" height="6" fill="#f0f0f3"/><rect x="2" y="20" width="12" height="6" fill="#f0f0f3"/></svg>
<div class="S " style="left:287.6px;top:1217.2px;font-size:23.7px;line-height:26.47px;color:#000000;transform:scaleX(1.0);transform-origin:0 0;">PlannedWorkingTime (nvarchar(255), Nicht NULL)</div>
<svg style="left:219px;top:1251px;" width="27" height="22" viewBox="0 0 27 22"><path d="M0 4Q0 3 1 3H6L9 1Q10 0 11 0H26Q27 0 27 1V21Q27 22 26 22H1Q0 22 0 21Z" fill="#dcb67a"/><path d="M11 2H25V4H11Z" fill="#f3e3c4"/></svg>
<div class="S " style="left:252.3px;top:1251.2px;font-size:23.7px;line-height:26.47px;color:#000000;transform:scaleX(0.9691);transform-origin:0 0;">Schlüssel</div>
<div style="left:187px;top:1288px;width:16px;height:16px;border:1px solid #a3a3a3;border-radius:2px;background:linear-gradient(#fdfdfd,#e4e4e4);"></div>
<div style="left:191px;top:1296px;width:10px;height:2px;background:#36498c;"></div>
<svg style="left:219px;top:1285px;" width="27" height="22" viewBox="0 0 27 22"><path d="M0 4Q0 3 1 3H6L9 1Q10 0 11 0H26Q27 0 27 1V21Q27 22 26 22H1Q0 22 0 21Z" fill="#dcb67a"/><path d="M11 2H25V4H11Z" fill="#f3e3c4"/></svg>
<div class="S " style="left:252.3px;top:1285.2px;font-size:23.7px;line-height:26.47px;color:#000000;transform:scaleX(1.0);transform-origin:0 0;">Einschränkungen</div>
<svg style="left:256px;top:1318px;" width="22" height="25" viewBox="0 0 22 25"><rect x="9" y="0" width="12" height="19" fill="#3c3c3c"/><rect x="11" y="4" width="8" height="3.2" fill="#f4f4f6"/><rect x="11" y="9" width="8" height="3.2" fill="#f4f4f6"/><rect x="11" y="14" width="8" height="4" fill="#f4f4f6"/><rect x="9" y="16" width="6" height="9" fill="#ffffff"/><rect x="0.8" y="18.8" width="11.4" height="5.4" fill="#fff" stroke="#3c3c3c" stroke-width="1.6"/><rect x="3" y="20.3" width="1.5" height="2.4" fill="#3c3c3c"/><rect x="5.8" y="20" width="1" height="3" fill="#3c3c3c"/><rect x="8" y="20.3" width="1.5" height="2.4" fill="#3c3c3c"/><rect x="10.6" y="20" width="1" height="3" fill="#3c3c3c"/></svg>
<div class="S " style="left:287.3px;top:1319.2px;font-size:23.7px;line-height:26.47px;color:#000000;transform:scaleX(0.9162);transform-origin:0 0;">DF__Facts_Pla__AD-On__0D875183</div>
<svg style="left:256px;top:1352px;" width="22" height="25" viewBox="0 0 22 25"><rect x="9" y="0" width="12" height="19" fill="#3c3c3c"/><rect x="11" y="4" width="8" height="3.2" fill="#f4f4f6"/><rect x="11" y="9" width="8" height="3.2" fill="#f4f4f6"/><rect x="11" y="14" width="8" height="4" fill="#f4f4f6"/><rect x="9" y="16" width="6" height="9" fill="#ffffff"/><rect x="0.8" y="18.8" width="11.4" height="5.4" fill="#fff" stroke="#3c3c3c" stroke-width="1.6"/><rect x="3" y="20.3" width="1.5" height="2.4" fill="#3c3c3c"/><rect x="5.8" y="20" width="1" height="3" fill="#3c3c3c"/><rect x="8" y="20.3" width="1.5" height="2.4" fill="#3c3c3c"/><rect x="10.6" y="20" width="1" height="3" fill="#3c3c3c"/></svg>
<div class="S " style="left:287.3px;top:1353.2px;font-size:23.7px;line-height:26.47px;color:#000000;transform:scaleX(0.8746);transform-origin:0 0;">DF__Facts_Pla__BP_ID__0E7B75BC</div>
<svg style="left:256px;top:1386px;" width="22" height="25" viewBox="0 0 22 25"><rect x="9" y="0" width="12" height="19" fill="#3c3c3c"/><rect x="11" y="4" width="8" height="3.2" fill="#f4f4f6"/><rect x="11" y="9" width="8" height="3.2" fill="#f4f4f6"/><rect x="11" y="14" width="8" height="4" fill="#f4f4f6"/><rect x="9" y="16" width="6" height="9" fill="#ffffff"/><rect x="0.8" y="18.8" width="11.4" height="5.4" fill="#fff" stroke="#3c3c3c" stroke-width="1.6"/><rect x="3" y="20.3" width="1.5" height="2.4" fill="#3c3c3c"/><rect x="5.8" y="20" width="1" height="3" fill="#3c3c3c"/><rect x="8" y="20.3" width="1.5" height="2.4" fill="#3c3c3c"/><rect x="10.6" y="20" width="1" height="3" fill="#3c3c3c"/></svg>
<div class="S " style="left:287.3px;top:1387.2px;font-size:23.7px;line-height:26.47px;color:#000000;transform:scaleX(0.9008);transform-origin:0 0;">DF__Facts_Pla__Calen__1157E267</div>
<svg style="left:256px;top:1420px;" width="22" height="25" viewBox="0 0 22 25"><rect x="9" y="0" width="12" height="19" fill="#3c3c3c"/><rect x="11" y="4" width="8" height="3.2" fill="#f4f4f6"/><rect x="11" y="9" width="8" height="3.2" fill="#f4f4f6"/><rect x="11" y="14" width="8" height="4" fill="#f4f4f6"/><rect x="9" y="16" width="6" height="9" fill="#ffffff"/><rect x="0.8" y="18.8" width="11.4" height="5.4" fill="#fff" stroke="#3c3c3c" stroke-width="1.6"/><rect x="3" y="20.3" width="1.5" height="2.4" fill="#3c3c3c"/><rect x="5.8" y="20" width="1" height="3" fill="#3c3c3c"/><rect x="8" y="20.3" width="1.5" height="2.4" fill="#3c3c3c"/><rect x="10.6" y="20" width="1" height="3" fill="#3c3c3c"/></svg>
<div class="S " style="left:287.3px;top:1421.2px;font-size:23.7px;line-height:26.47px;color:#000000;transform:scaleX(0.8778);transform-origin:0 0;">DF__Facts_Pla__P1_ID__0F6F99F5</div>
<svg style="left:256px;top:1454px;" width="22" height="25" viewBox="0 0 22 25"><rect x="9" y="0" width="12" height="19" fill="#3c3c3c"/><rect x="11" y="4" width="8" height="3.2" fill="#f4f4f6"/><rect x="11" y="9" width="8" height="3.2" fill="#f4f4f6"/><rect x="11" y="14" width="8" height="4" fill="#f4f4f6"/><rect x="9" y="16" width="6" height="9" fill="#ffffff"/><rect x="0.8" y="18.8" width="11.4" height="5.4" fill="#fff" stroke="#3c3c3c" stroke-width="1.6"/><rect x="3" y="20.3" width="1.5" height="2.4" fill="#3c3c3c"/><rect x="5.8" y="20" width="1" height="3" fill="#3c3c3c"/><rect x="8" y="20.3" width="1.5" height="2.4" fill="#3c3c3c"/><rect x="10.6" y="20" width="1" height="3" fill="#3c3c3c"/></svg>
<div class="S " style="left:287.3px;top:1455.2px;font-size:23.7px;line-height:26.47px;color:#000000;transform:scaleX(0.9018);transform-origin:0 0;">DF__Facts_Pla__Plann__124C06A0</div>
<svg style="left:256px;top:1488px;" width="22" height="25" viewBox="0 0 22 25"><rect x="9" y="0" width="12" height="19" fill="#3c3c3c"/><rect x="11" y="4" width="8" height="3.2" fill="#f4f4f6"/><rect x="11" y="9" width="8" height="3.2" fill="#f4f4f6"/><rect x="11" y="14" width="8" height="4" fill="#f4f4f6"/><rect x="9" y="16" width="6" height="9" fill="#ffffff"/><rect x="0.8" y="18.8" width="11.4" height="5.4" fill="#fff" stroke="#3c3c3c" stroke-width="1.6"/><rect x="3" y="20.3" width="1.5" height="2.4" fill="#3c3c3c"/><rect x="5.8" y="20" width="1" height="3" fill="#3c3c3c"/><rect x="8" y="20.3" width="1.5" height="2.4" fill="#3c3c3c"/><rect x="10.6" y="20" width="1" height="3" fill="#3c3c3c"/></svg>
<div class="S " style="left:287.3px;top:1489.2px;font-size:23.7px;line-height:26.47px;color:#000000;transform:scaleX(0.8785);transform-origin:0 0;">DF__Facts_Plann__FTE__1063BE2E</div>
<div style="left:187px;top:1526px;width:16px;height:16px;border:1px solid #a3a3a3;border-radius:2px;background:linear-gradient(#fdfdfd,#e4e4e4);"></div>
<div style="left:191px;top:1534px;width:10px;height:2px;background:#36498c;"></div>
<div style="left:195px;top:1530px;width:2px;height:10px;background:#36498c;"></div>
<svg style="left:219px;top:1523px;" width="27" height="22" viewBox="0 0 27 22"><path d="M0 4Q0 3 1 3H6L9 1Q10 0 11 0H26Q27 0 27 1V21Q27 22 26 22H1Q0 22 0 21Z" fill="#dcb67a"/><path d="M11 2H25V4H11Z" fill="#f3e3c4"/></svg>
<div class="S " style="left:252.3px;top:1523.2px;font-size:23.7px;line-height:26.47px;color:#000000;transform:scaleX(1.0347);transform-origin:0 0;">Trigger</div>
<svg style="left:219px;top:1557px;" width="27" height="22" viewBox="0 0 27 22"><path d="M0 4Q0 3 1 3H6L9 1Q10 0 11 0H26Q27 0 27 1V21Q27 22 26 22H1Q0 22 0 21Z" fill="#dcb67a"/><path d="M11 2H25V4H11Z" fill="#f3e3c4"/></svg>
<div class="S " style="left:252.3px;top:1557.2px;font-size:23.7px;line-height:26.47px;color:#000000;transform:scaleX(0.9986);transform-origin:0 0;">Indizes</div>
<div style="left:187px;top:1594px;width:16px;height:16px;border:1px solid #a3a3a3;border-radius:2px;background:linear-gradient(#fdfdfd,#e4e4e4);"></div>
<div style="left:191px;top:1602px;width:10px;height:2px;background:#36498c;"></div>
<svg style="left:219px;top:1591px;" width="27" height="22" viewBox="0 0 27 22"><path d="M0 4Q0 3 1 3H6L9 1Q10 0 11 0H26Q27 0 27 1V21Q27 22 26 22H1Q0 22 0 21Z" fill="#dcb67a"/><path d="M11 2H25V4H11Z" fill="#f3e3c4"/></svg>
<div class="S " style="left:252.3px;top:1591.2px;font-size:23.7px;line-height:26.47px;color:#000000;transform:scaleX(1.0025);transform-origin:0 0;">Statistik</div>
<svg style="left:252px;top:1622px;" width="28" height="26" viewBox="0 0 28 26"><rect x="1" y="1" width="26" height="24" fill="#f0f0f3" stroke="#3c3c3c" stroke-width="2"/><rect x="5" y="12" width="4" height="12" fill="#3c3c3c"/><rect x="12" y="4" width="4" height="20" fill="#3c3c3c"/><rect x="19" y="10" width="4" height="14" fill="#3c3c3c"/></svg>
<div class="S " style="left:287.3px;top:1625.2px;font-size:23.7px;line-height:26.47px;color:#000000;transform:scaleX(0.9357);transform-origin:0 0;">_WA_Sys_00000002_0C932D4A</div>
<svg style="left:252px;top:1656px;" width="28" height="26" viewBox="0 0 28 26"><rect x="1" y="1" width="26" height="24" fill="#f0f0f3" stroke="#3c3c3c" stroke-width="2"/><rect x="5" y="12" width="4" height="12" fill="#3c3c3c"/><rect x="12" y="4" width="4" height="20" fill="#3c3c3c"/><rect x="19" y="10" width="4" height="14" fill="#3c3c3c"/></svg>
<div class="S " style="left:287.3px;top:1659.2px;font-size:23.7px;line-height:26.47px;color:#000000;transform:scaleX(0.9357);transform-origin:0 0;">_WA_Sys_00000004_0C932D4A</div>
<svg style="left:252px;top:1690px;" width="28" height="26" viewBox="0 0 28 26"><rect x="1" y="1" width="26" height="24" fill="#f0f0f3" stroke="#3c3c3c" stroke-width="2"/><rect x="5" y="12" width="4" height="12" fill="#3c3c3c"/><rect x="12" y="4" width="4" height="20" fill="#3c3c3c"/><rect x="19" y="10" width="4" height="14" fill="#3c3c3c"/></svg>
<div class="S " style="left:287.3px;top:1693.2px;font-size:23.7px;line-height:26.47px;color:#000000;transform:scaleX(0.9471);transform-origin:0 0;">_WA_Sys_00000005_0C932D4A</div>
<svg style="left:146px;top:944px;mix-blend-mode:darken;" width="434" height="24" viewBox="0 0 434 24"><path d="M3 3Q200 0 431 2L431 19Q200 22 3 21Z" fill="#ffe600"/></svg>
<div style="left:802px;top:122px;width:32px;height:1579px;background:#f0f0f0;"></div>
<div style="left:802px;top:498px;width:32px;height:780px;background:#cdcdcd;"></div>
<svg style="left:810px;top:136px;" width="16" height="10" viewBox="0 0 16 10"><path d="M1 9L8 2L15 9" fill="none" stroke="#606060" stroke-width="2.4"/></svg>
<div style="left:834px;top:122px;width:2px;height:1579px;background:#ffffff;"></div>
<div style="left:836px;top:122px;width:1px;height:1579px;background:#808590;"></div>
<div style="left:837px;top:23px;width:2px;height:1678px;background:#9aa6c8;"></div>
<div style="left:839px;top:23px;width:12px;height:1678px;background:linear-gradient(#293955 0px,#293955 60px,#33476a 1000px,#35496c 1678px);"></div>
<div style="left:851px;top:23px;width:537px;height:40px;background:#364e6f;"></div>
<div class="S " style="left:859.0px;top:34.1px;font-size:23.7px;line-height:26.47px;color:#ffffff;transform:scaleX(0.991);transform-origin:0 0;">SQLQuery3.sql - W…g (W10\admin (60))*</div>
<div style="left:1388px;top:23px;width:533px;height:40px;background:#fff29d;"></div>
<div class="S " style="left:1395.8px;top:34.1px;font-size:23.7px;line-height:26.47px;color:#000000;transform:scaleX(0.9886);transform-origin:0 0;">SQLQuery2.sql - W…g (W10\admin (59))*</div>
<svg style="left:1852px;top:37px;" width="18" height="16" viewBox="0 0 18 16"><rect x="1" y="7" width="7" height="1.8" fill="#6d5f3f"/><rect x="7" y="1" width="1.9" height="14" fill="#6d5f3f"/><path d="M8.9 3H17V12.8H8.9Z M8.9 4.8V9.1H15.2V4.8Z" fill="#6d5f3f" fill-rule="evenodd"/></svg>
<svg style="left:1889px;top:37px;" width="20" height="16" viewBox="0 0 20 16"><path d="M0 0.5H4.5L10 6.3L15.5 0.5H20L12.3 8L20 15.5H15.5L10 9.7L4.5 15.5H0L7.7 8Z" fill="#6d6148"/></svg>
<div style="left:1921px;top:23px;width:527px;height:40px;background:#364e6f;"></div>
<div class="S " style="left:1930.0px;top:34.1px;font-size:23.7px;line-height:26.47px;color:#ffffff;transform:scaleX(0.988);transform-origin:0 0;">SQLQuery1.sql - W…g (W10\admin (58))</div>
<svg style="left:2806px;top:42px;" width="16" height="9" viewBox="0 0 16 9"><path d="M0 0H16L8 9Z" fill="#d0d6e2"/></svg>
<div style="left:851px;top:63px;width:1977px;height:4px;background:#fff29d;"></div>
<div style="left:851px;top:67px;width:1977px;height:1634px;background:#8e9bbd;"></div>
<div style="left:853px;top:67px;width:1935px;height:598px;background:#ffffff;"></div>
<div style="left:853px;top:67px;width:37px;height:598px;background:#e6e7e8;"></div>
<div style="left:975px;top:67px;width:10px;height:598px;background:#ffee62;"></div>
<div style="left:975px;top:104px;width:10px;height:1px;background:#fff6b8;"></div>
<div style="left:975px;top:142px;width:10px;height:1px;background:#fff6b8;"></div>
<div style="left:975px;top:179px;width:10px;height:1px;background:#fff6b8;"></div>
<div style="left:975px;top:217px;width:10px;height:1px;background:#fff6b8;"></div>
<div style="left:975px;top:254px;width:10px;height:1px;background:#fff6b8;"></div>
<div style="left:975px;top:291px;width:10px;height:1px;background:#fff6b8;"></div>
<div style="left:975px;top:329px;width:10px;height:1px;background:#fff6b8;"></div>
<div style="left:975px;top:366px;width:10px;height:1px;background:#fff6b8;"></div>
<div style="left:975px;top:404px;width:10px;height:1px;background:#fff6b8;"></div>
<div style="left:975px;top:441px;width:10px;height:1px;background:#fff6b8;"></div>
<div style="left:975px;top:478px;width:10px;height:1px;background:#fff6b8;"></div>
<div style="left:975px;top:516px;width:10px;height:1px;background:#fff6b8;"></div>
<div style="left:975px;top:553px;width:10px;height:1px;background:#fff6b8;"></div>
<div style="left:975px;top:591px;width:10px;height:1px;background:#fff6b8;"></div>
<div style="left:975px;top:628px;width:10px;height:1px;background:#fff6b8;"></div>
<div style="left:991px;top:76px;width:16px;height:16px;border:2px solid #a5a5a5;background:#fff;"></div>
<div style="left:995px;top:85px;width:11px;height:2px;background:#555555;"></div>
<div style="left:1001px;top:97px;width:2px;height:568px;background:#a5a5a5;"></div>
<div class="M " style="left:1014.5px;top:71.3px;font-size:29.1px;line-height:32.96px;color:#000;letter-spacing:-1.760px;"><span style="color:#0000ff">SELECT</span></div>
<div class="M " style="left:951.8px;top:71.3px;font-size:29.1px;line-height:32.96px;color:#2b91af;letter-spacing:-1.760px;">1</div>
<div class="M " style="left:1014.5px;top:108.7px;font-size:29.1px;line-height:32.96px;color:#000;letter-spacing:-1.760px;"><span style="color:#000000">    </span><span style="color:#000000">t</span><span style="color:#808080">.</span><span style="color:#0000ff">NAME</span><span style="color:#000000"> </span><span style="color:#0000ff">AS</span><span style="color:#000000"> </span><span style="color:#000000">TableName</span><span style="color:#808080">,</span></div>
<div class="M " style="left:951.8px;top:108.7px;font-size:29.1px;line-height:32.96px;color:#2b91af;letter-spacing:-1.760px;">2</div>
<div class="M " style="left:1014.5px;top:146.1px;font-size:29.1px;line-height:32.96px;color:#000;letter-spacing:-1.760px;"><span style="color:#000000">    </span><span style="color:#000000">s</span><span style="color:#808080">.</span><span style="color:#0000ff">Name</span><span style="color:#000000"> </span><span style="color:#0000ff">AS</span><span style="color:#000000"> </span><span style="color:#000000">SchemaName</span><span style="color:#808080">,</span></div>
<div class="M " style="left:951.8px;top:146.1px;font-size:29.1px;line-height:32.96px;color:#2b91af;letter-spacing:-1.760px;">3</div>
<div class="M " style="left:1014.5px;top:183.5px;font-size:29.1px;line-height:32.96px;color:#000;letter-spacing:-1.760px;"><span style="color:#000000">    </span><span style="color:#000000">p</span><span style="color:#808080">.</span><span style="color:#0000ff">rows</span><span style="color:#808080">,</span></div>
<div class="M " style="left:951.8px;top:183.5px;font-size:29.1px;line-height:32.96px;color:#2b91af;letter-spacing:-1.760px;">4</div>
<div class="M " style="left:1014.5px;top:220.9px;font-size:29.1px;line-height:32.96px;color:#000;letter-spacing:-1.760px;"><span style="color:#000000">    </span><span style="color:#ff00ff">SUM</span><span style="color:#808080">(</span><span style="color:#000000">a</span><span style="color:#808080">.</span><span style="color:#000000">total_pages</span><span style="color:#808080">)</span><span style="color:#000000"> </span><span style="color:#808080">*</span><span style="color:#000000"> </span><span style="color:#000000">8</span><span style="color:#000000"> </span><span style="color:#0000ff">AS</span><span style="color:#000000"> </span><span style="color:#000000">TotalSpaceKB</span><span style="color:#808080">,</span></div>
<div class="M " style="left:951.8px;top:220.9px;font-size:29.1px;line-height:32.96px;color:#2b91af;letter-spacing:-1.760px;">5</div>
<div class="M " style="left:1014.5px;top:258.3px;font-size:29.1px;line-height:32.96px;color:#000;letter-spacing:-1.760px;"><span style="color:#000000">    </span><span style="color:#ff00ff">CAST</span><span style="color:#808080">(</span><span style="color:#ff00ff">ROUND</span><span style="color:#808080">(</span><span style="color:#808080">(</span><span style="color:#808080">(</span><span style="color:#ff00ff">SUM</span><span style="color:#808080">(</span><span style="color:#000000">a</span><span style="color:#808080">.</span><span style="color:#000000">total_pages</span><span style="color:#808080">)</span><span style="color:#000000"> </span><span style="color:#808080">*</span><span style="color:#000000"> </span><span style="color:#000000">8</span><span style="color:#808080">)</span><span style="color:#000000"> </span><span style="color:#808080">/</span><span style="color:#000000"> </span><span style="color:#000000">1024.00</span><span style="color:#808080">)</span><span style="color:#808080">,</span><span style="color:#000000"> </span><span style="color:#000000">2</span><span style="color:#808080">)</span><span style="color:#000000"> </span><span style="color:#0000ff">AS</span><span style="color:#000000"> </span><span style="color:#0000ff">NUMERIC</span><span style="color:#808080">(</span><span style="color:#000000">36</span><span style="color:#808080">,</span><span style="color:#000000"> </span><span style="color:#000000">2</span><span style="color:#808080">)</span><span style="color:#808080">)</span><span style="color:#000000"> </span><span style="color:#0000ff">AS</span><span style="color:#000000"> </span><span style="color:#000000">TotalSpaceMB</span><span style="color:#808080">,</span></div>
<div class="M " style="left:951.8px;top:258.3px;font-size:29.1px;line-height:32.96px;color:#2b91af;letter-spacing:-1.760px;">6</div>
<div class="M " style="left:1014.5px;top:295.7px;font-size:29.1px;line-height:32.96px;color:#000;letter-spacing:-1.760px;"><span style="color:#000000">    </span><span style="color:#ff00ff">SUM</span><span style="color:#808080">(</span><span style="color:#000000">a</span><span style="color:#808080">.</span><span style="color:#000000">used_pages</span><span style="color:#808080">)</span><span style="color:#000000"> </span><span style="color:#808080">*</span><span style="color:#000000"> </span><span style="color:#000000">8</span><span style="color:#000000"> </span><span style="color:#0000ff">AS</span><span style="color:#000000"> </span><span style="color:#000000">UsedSpaceKB</span><span style="color:#808080">,</span></div>
<div class="M " style="left:951.8px;top:295.7px;font-size:29.1px;line-height:32.96px;color:#2b91af;letter-spacing:-1.760px;">7</div>
<div class="M " style="left:1014.5px;top:333.1px;font-size:29.1px;line-height:32.96px;color:#000;letter-spacing:-1.760px;"><span style="color:#000000">    </span><span style="color:#ff00ff">CAST</span><span style="color:#808080">(</span><span style="color:#ff00ff">ROUND</span><span style="color:#808080">(</span><span style="color:#808080">(</span><span style="color:#808080">(</span><span style="color:#ff00ff">SUM</span><span style="color:#808080">(</span><span style="color:#000000">a</span><span style="color:#808080">.</span><span style="color:#000000">used_pages</span><span style="color:#808080">)</span><span style="color:#000000"> </span><span style="color:#808080">*</span><span style="color:#000000"> </span><span style="color:#000000">8</span><span style="color:#808080">)</span><span style="color:#000000"> </span><span style="color:#808080">/</span><span style="color:#000000"> </span><span style="color:#000000">1024.00</span><span style="color:#808080">)</span><span style="color:#808080">,</span><span style="color:#000000"> </span><span style="color:#000000">2</span><span style="color:#808080">)</span><span style="color:#000000"> </span><span style="color:#0000ff">AS</span><span style="color:#000000"> </span><span style="color:#0000ff">NUMERIC</span><span style="color:#808080">(</span><span style="color:#000000">36</span><span style="color:#808080">,</span><span style="color:#000000"> </span><span style="color:#000000">2</span><span style="color:#808080">)</span><span style="color:#808080">)</span><span style="color:#000000"> </span><span style="color:#0000ff">AS</span><span style="color:#000000"> </span><span style="color:#000000">UsedSpaceMB</span><span style="color:#808080">,</span></div>
<div class="M " style="left:951.8px;top:333.1px;font-size:29.1px;line-height:32.96px;color:#2b91af;letter-spacing:-1.760px;">8</div>
<div class="M " style="left:1014.5px;top:370.5px;font-size:29.1px;line-height:32.96px;color:#000;letter-spacing:-1.760px;"><span style="color:#000000">    </span><span style="color:#808080">(</span><span style="color:#ff00ff">SUM</span><span style="color:#808080">(</span><span style="color:#000000">a</span><span style="color:#808080">.</span><span style="color:#000000">total_pages</span><span style="color:#808080">)</span><span style="color:#000000"> </span><span style="color:#808080">-</span><span style="color:#000000"> </span><span style="color:#ff00ff">SUM</span><span style="color:#808080">(</span><span style="color:#000000">a</span><span style="color:#808080">.</span><span style="color:#000000">used_pages</span><span style="color:#808080">)</span><span style="color:#808080">)</span><span style="color:#000000"> </span><span style="color:#808080">*</span><span style="color:#000000"> </span><span style="color:#000000">8</span><span style="color:#000000"> </span><span style="color:#0000ff">AS</span><span style="color:#000000"> </span><span style="color:#000000">UnusedSpaceKB</span><span style="color:#808080">,</span></div>
<div class="M " style="left:951.8px;top:370.5px;font-size:29.1px;line-height:32.96px;color:#2b91af;letter-spacing:-1.760px;">9</div>
<div class="M " style="left:1014.5px;top:407.9px;font-size:29.1px;line-height:32.96px;color:#000;letter-spacing:-1.760px;"><span style="color:#000000">    </span><span style="color:#ff00ff">CAST</span><span style="color:#808080">(</span><span style="color:#ff00ff">ROUND</span><span style="color:#808080">(</span><span style="color:#808080">(</span><span style="color:#808080">(</span><span style="color:#ff00ff">SUM</span><span style="color:#808080">(</span><span style="color:#000000">a</span><span style="color:#808080">.</span><span style="color:#000000">total_pages</span><span style="color:#808080">)</span><span style="color:#000000"> </span><span style="color:#808080">-</span><span style="color:#000000"> </span><span style="color:#ff00ff">SUM</span><span style="color:#808080">(</span><span style="color:#000000">a</span><span style="color:#808080">.</span><span style="color:#000000">used_pages</span><span style="color:#808080">)</span><span style="color:#808080">)</span><span style="color:#000000"> </span><span style="color:#808080">*</span><span style="color:#000000"> </span><span style="color:#000000">8</span><span style="color:#808080">)</span><span style="color:#000000"> </span><span style="color:#808080">/</span><span style="color:#000000"> </span><span style="color:#000000">1024.00</span><span style="color:#808080">,</span><span style="color:#000000"> </span><span style="color:#000000">2</span><span style="color:#808080">)</span><span style="color:#000000"> </span><span style="color:#0000ff">AS</span><span style="color:#000000"> </span><span style="color:#0000ff">NUMERIC</span><span style="color:#808080">(</span><span style="color:#000000">36</span><span style="color:#808080">,</span><span style="color:#000000"> </span><span style="color:#000000">2</span><span style="color:#808080">)</span><span style="color:#808080">)</span><span style="color:#000000"> </span><span style="color:#0000ff">AS</span><span style="color:#000000"> </span><span style="color:#000000">UnusedSpaceMB</span></div>
<div class="M " style="left:936.1px;top:407.9px;font-size:29.1px;line-height:32.96px;color:#2b91af;letter-spacing:-1.760px;">10</div>
<div class="M " style="left:1014.5px;top:445.3px;font-size:29.1px;line-height:32.96px;color:#000;letter-spacing:-1.760px;"><span style="color:#0000ff">FROM</span></div>
<div class="M " style="left:936.1px;top:445.3px;font-size:29.1px;line-height:32.96px;color:#2b91af;letter-spacing:-1.760px;">11</div>
<div class="M " style="left:1014.5px;top:482.7px;font-size:29.1px;line-height:32.96px;color:#000;letter-spacing:-1.760px;"><span style="color:#000000">    </span><span style="color:#00ff00">sys</span><span style="color:#808080">.</span><span style="color:#00ff00">tables</span><span style="color:#000000"> </span><span style="color:#000000">t</span></div>
<div class="M " style="left:936.1px;top:482.7px;font-size:29.1px;line-height:32.96px;color:#2b91af;letter-spacing:-1.760px;">12</div>
<div class="M " style="left:1014.5px;top:520.1px;font-size:29.1px;line-height:32.96px;color:#000;letter-spacing:-1.760px;"><span style="color:#808080">INNER</span><span style="color:#000000"> </span><span style="color:#808080">JOIN</span></div>
<div class="M " style="left:936.1px;top:520.1px;font-size:29.1px;line-height:32.96px;color:#2b91af;letter-spacing:-1.760px;">13</div>
<div class="M " style="left:1014.5px;top:557.5px;font-size:29.1px;line-height:32.96px;color:#000;letter-spacing:-1.760px;"><span style="color:#000000">    </span><span style="color:#00ff00">sys</span><span style="color:#808080">.</span><span style="color:#00ff00">indexes</span><span style="color:#000000"> </span><span style="color:#000000">i</span><span style="color:#000000"> </span><span style="color:#0000ff">ON</span><span style="color:#000000"> </span><span style="color:#000000">t</span><span style="color:#808080">.</span><span style="color:#ff00ff">OBJECT_ID</span><span style="color:#000000"> </span><span style="color:#808080">=</span><span style="color:#000000"> </span><span style="color:#000000">i</span><span style="color:#808080">.</span><span style="color:#ff00ff">object_id</span></div>
<div class="M " style="left:936.1px;top:557.5px;font-size:29.1px;line-height:32.96px;color:#2b91af;letter-spacing:-1.760px;">14</div>
<div class="M " style="left:1014.5px;top:594.9px;font-size:29.1px;line-height:32.96px;color:#000;letter-spacing:-1.760px;"><span style="color:#808080">INNER</span><span style="color:#000000"> </span><span style="color:#808080">JOIN</span></div>
<div class="M " style="left:936.1px;top:594.9px;font-size:29.1px;line-height:32.96px;color:#2b91af;letter-spacing:-1.760px;">15</div>
<div class="M " style="left:1014.5px;top:632.3px;font-size:29.1px;line-height:32.96px;color:#000;letter-spacing:-1.760px;"><span style="color:#000000">    </span><span style="color:#00ff00">sys</span><span style="color:#808080">.</span><span style="color:#00ff00">partitions</span><span style="color:#000000"> </span><span style="color:#000000">p</span><span style="color:#000000"> </span><span style="color:#0000ff">ON</span><span style="color:#000000"> </span><span style="color:#000000">i</span><span style="color:#808080">.</span><span style="color:#ff00ff">object_id</span><span style="color:#000000"> </span><span style="color:#808080">=</span><span style="color:#000000"> </span><span style="color:#000000">p</span><span style="color:#808080">.</span><span style="color:#ff00ff">OBJECT_ID</span><span style="color:#000000"> </span><span style="color:#808080">AND</span><span style="color:#000000"> </span><span style="color:#000000">i</span><span style="color:#808080">.</span><span style="color:#000000">index_id</span><span style="color:#000000"> </span><span style="color:#808080">=</span><span style="color:#000000"> </span><span style="color:#000000">p</span><span style="color:#808080">.</span><span style="color:#000000">index_id</span></div>
<div class="M " style="left:936.1px;top:632.3px;font-size:29.1px;line-height:32.96px;color:#2b91af;letter-spacing:-1.760px;">16</div>
<div style="left:2788px;top:67px;width:38px;height:598px;background:#e8e8ec;"></div>
<div style="left:2788px;top:67px;width:38px;height:33px;background:#e8eefc;box-sizing:border-box;border-left:1px solid #a9b4ca;border-bottom:2px solid #a9b4ca;"></div>
<svg style="left:2795px;top:70px;" width="24" height="27" viewBox="0 0 24 27"><path d="M12 2V11M12 16V25M7 7L12 2L17 7M7 20L12 25L17 20" fill="none" stroke="#1e1e1e" stroke-width="2"/><rect x="1" y="11" width="22" height="2" fill="#1e1e1e"/><rect x="1" y="15" width="22" height="2" fill="#1e1e1e"/></svg>
<div style="left:2788px;top:100px;width:38px;height:1px;background:#c9d0de;"></div>
<svg style="left:2798px;top:113px;" width="18" height="10" viewBox="0 0 18 10"><path d="M0 10L9 1L18 10Z" fill="#868999"/></svg>
<div style="left:2791px;top:135px;width:8px;height:478px;background:#ffee62;"></div>
<div style="left:2799px;top:135px;width:19px;height:173px;background:#c2c3c9;"></div>
<div style="left:2788px;top:444px;width:38px;height:3px;background:#0000c8;"></div>
<svg style="left:2798px;top:643px;" width="18" height="10" viewBox="0 0 18 10"><path d="M0 0L9 9L18 0Z" fill="#868999"/></svg>
<div style="left:853px;top:665px;width:1973px;height:34px;background:#e8e8ec;"></div>
<div style="left:854px;top:665px;width:115px;height:29px;border:2px solid #bcc6d9;background:#fbfbfb;"></div>
<div class="S " style="left:858.0px;top:672.2px;font-size:23px;line-height:25.69px;color:#000;">110 %</div>
<svg style="left:955px;top:680px;" width="12" height="7" viewBox="0 0 12 7"><path d="M0 0H12L6 7Z" fill="#1e1e1e"/></svg>
<svg style="left:985px;top:673px;" width="11" height="18" viewBox="0 0 11 18"><path d="M11 0V18L0 9Z" fill="#868999"/></svg>
<div style="left:1007px;top:673px;width:1405px;height:18px;background:#c2c3c9;"></div>
<svg style="left:2766px;top:673px;" width="11" height="18" viewBox="0 0 11 18"><path d="M0 0V18L11 9Z" fill="#868999"/></svg>
<div style="left:853px;top:699px;width:1973px;height:1002px;background:#f0f0f0;"></div>
<div style="left:853px;top:703px;width:165px;height:40px;background:#ffffff;border:1px solid #e6e6e6;border-bottom:none;"></div>
<div style="left:1018px;top:707px;width:151px;height:36px;background:#f0f0f0;border:1px solid #dcdcdc;border-bottom:none;"></div>
<svg style="left:867px;top:708px;" width="25" height="23" viewBox="0 0 25 23"><rect x="0.7" y="0.7" width="23.6" height="21.6" fill="#f0f0f0" stroke="#3c3c3c" stroke-width="1.4"/><rect x="0" y="0" width="25" height="3" fill="#3c3c3c"/><rect x="6" y="2" width="1.2" height="21" fill="#3c3c3c"/><rect x="12" y="2" width="1.2" height="21" fill="#3c3c3c"/><rect x="18" y="2" width="1.2" height="21" fill="#3c3c3c"/><rect x="0" y="7" width="25" height="1.2" fill="#3c3c3c"/><rect x="0" y="12" width="25" height="1.2" fill="#3c3c3c"/><rect x="0" y="17" width="25" height="1.2" fill="#3c3c3c"/></svg>
<div class="S " style="left:899.7px;top:708.5px;font-size:21px;line-height:23.46px;color:#000;transform:scaleX(1.056);transform-origin:0 0;">Ergebnisse</div>
<svg style="left:1022px;top:709px;" width="30" height="30" viewBox="0 0 30 30"><path d="M15 1H29V23H18V11L15 8Z" fill="#3c3c3c"/><rect x="17.5" y="3" width="9.5" height="2" fill="#fff"/><rect x="17.5" y="7" width="9.5" height="2" fill="#fff"/><rect x="25" y="18.6" width="2" height="2.2" fill="#fff"/><path d="M2 11Q2 10 3 10H12L16 14V27Q16 28 15 28H3Q2 28 2 27Z" fill="#fff" stroke="#3c3c3c" stroke-width="2"/><path d="M11.5 10.5H12.5L16 14V15H11.5Z" fill="#3c3c3c"/><path d="M4.5 16.5H10M4.5 20.5H13M4.5 24.5H13" stroke="#3c3c3c" stroke-width="1.8"/></svg>
<div class="S " style="left:1059.3px;top:713.0px;font-size:21px;line-height:23.46px;color:#000;transform:scaleX(1.06);transform-origin:0 0;">Meldungen</div>
<div style="left:853px;top:742px;width:1973px;height:959px;background:#ffffff;"></div>
<div style="left:1018px;top:741px;width:152px;height:1px;background:#e0e0e0;"></div>
<div style="left:861px;top:745px;width:1957px;height:956px;background:#ffffff;"></div>
<div style="left:861px;top:745px;width:1957px;height:1px;background:#a0a0a0;"></div>
<div style="left:861px;top:745px;width:1px;height:956px;background:#a0a0a0;"></div>
<div style="left:2817px;top:745px;width:1px;height:956px;background:#a0a0a0;"></div>
<div style="left:2823px;top:742px;width:1px;height:959px;background:#dadada;"></div>
<div style="left:862px;top:773px;width:1428.5px;height:1px;background:#e6e6e6;"></div>
<div style="left:862px;top:801px;width:1428.5px;height:1px;background:#e6e6e6;"></div>
<div style="left:862px;top:829px;width:1428.5px;height:1px;background:#e6e6e6;"></div>
<div style="left:862px;top:857px;width:1428.5px;height:1px;background:#e6e6e6;"></div>
<div style="left:862px;top:885px;width:1428.5px;height:1px;background:#e6e6e6;"></div>
<div style="left:862px;top:913px;width:1428.5px;height:1px;background:#e6e6e6;"></div>
<div style="left:862px;top:941px;width:1428.5px;height:1px;background:#e6e6e6;"></div>
<div style="left:862px;top:969px;width:1428.5px;height:1px;background:#e6e6e6;"></div>
<div style="left:862px;top:997px;width:1428.5px;height:1px;background:#e6e6e6;"></div>
<div style="left:862px;top:1025px;width:1428.5px;height:1px;background:#e6e6e6;"></div>
<div style="left:862px;top:1053px;width:1428.5px;height:1px;background:#e6e6e6;"></div>
<div style="left:862px;top:1081px;width:1428.5px;height:1px;background:#e6e6e6;"></div>
<div style="left:862px;top:1109px;width:1428.5px;height:1px;background:#e6e6e6;"></div>
<div style="left:862px;top:1137px;width:1428.5px;height:1px;background:#e6e6e6;"></div>
<div style="left:862px;top:1165px;width:1428.5px;height:1px;background:#e6e6e6;"></div>
<div style="left:862px;top:1193px;width:1428.5px;height:1px;background:#e6e6e6;"></div>
<div style="left:862px;top:1221px;width:1428.5px;height:1px;background:#e6e6e6;"></div>
<div style="left:862px;top:1249px;width:1428.5px;height:1px;background:#e6e6e6;"></div>
<div style="left:862px;top:1277px;width:1428.5px;height:1px;background:#e6e6e6;"></div>
<div style="left:862px;top:1305px;width:1428.5px;height:1px;background:#e6e6e6;"></div>
<div style="left:862px;top:1333px;width:1428.5px;height:1px;background:#e6e6e6;"></div>
<div style="left:862px;top:1361px;width:1428.5px;height:1px;background:#e6e6e6;"></div>
<div style="left:862px;top:1389px;width:1428.5px;height:1px;background:#e6e6e6;"></div>
<div style="left:862px;top:1417px;width:1428.5px;height:1px;background:#e6e6e6;"></div>
<div style="left:862px;top:1445px;width:1428.5px;height:1px;background:#e6e6e6;"></div>
<div style="left:862px;top:1473px;width:1428.5px;height:1px;background:#e6e6e6;"></div>
<div style="left:862px;top:1501px;width:1428.5px;height:1px;background:#e6e6e6;"></div>
<div style="left:862px;top:1529px;width:1428.5px;height:1px;background:#e6e6e6;"></div>
<div style="left:862px;top:1557px;width:1428.5px;height:1px;background:#e6e6e6;"></div>
<div style="left:862px;top:1585px;width:1428.5px;height:1px;background:#e6e6e6;"></div>
<div style="left:862px;top:1613px;width:1428.5px;height:1px;background:#e6e6e6;"></div>
<div style="left:862px;top:1641px;width:1428.5px;height:1px;background:#e6e6e6;"></div>
<div style="left:862px;top:1669px;width:1428.5px;height:1px;background:#e6e6e6;"></div>
<div style="left:862px;top:1697px;width:1428.5px;height:1px;background:#e6e6e6;"></div>
<div style="left:917px;top:746px;width:1px;height:955px;background:#e6e6e6;"></div>
<div style="left:1175px;top:746px;width:1px;height:955px;background:#e6e6e6;"></div>
<div style="left:1315px;top:746px;width:1px;height:955px;background:#e6e6e6;"></div>
<div style="left:1394px;top:746px;width:1px;height:955px;background:#e6e6e6;"></div>
<div style="left:1532.5px;top:746px;width:1px;height:955px;background:#e6e6e6;"></div>
<div style="left:1674.5px;top:746px;width:1px;height:955px;background:#e6e6e6;"></div>
<div style="left:1815px;top:746px;width:1px;height:955px;background:#e6e6e6;"></div>
<div style="left:1960px;top:746px;width:1px;height:955px;background:#e6e6e6;"></div>
<div style="left:2123px;top:746px;width:1px;height:955px;background:#e6e6e6;"></div>
<div style="left:2290.5px;top:746px;width:1px;height:955px;background:#e6e6e6;"></div>
<div style="left:1815.5px;top:969.5px;width:145px;height:28px;background:#a6cef2;box-sizing:border-box;border:1px dotted #000;"></div>
<div class="S " style="left:924.0px;top:748.8px;font-size:19px;line-height:21.22px;color:#000;">TableName</div>
<div class="S " style="left:1182.0px;top:748.8px;font-size:19px;line-height:21.22px;color:#000;">SchemaName</div>
<div class="S " style="left:1322.0px;top:748.8px;font-size:19px;line-height:21.22px;color:#000;">rows</div>
<div class="S " style="left:1401.0px;top:748.8px;font-size:19px;line-height:21.22px;color:#000;">TotalSpaceKB</div>
<div class="S " style="left:1539.5px;top:748.8px;font-size:19px;line-height:21.22px;color:#000;">TotalSpaceMB</div>
<div class="S " style="left:1681.5px;top:748.8px;font-size:19px;line-height:21.22px;color:#000;">UsedSpaceKB</div>
<div class="S " style="left:1822.0px;top:748.8px;font-size:19px;line-height:21.22px;color:#000;">UsedSpaceMB</div>
<div class="S " style="left:1967.0px;top:748.8px;font-size:19px;line-height:21.22px;color:#000;">UnusedSpaceKB</div>
<div class="S " style="left:2130.0px;top:748.8px;font-size:19px;line-height:21.22px;color:#000;">UnusedSpaceMB</div>
<div class="S " style="left:869.3px;top:776.8px;font-size:19px;line-height:21.22px;color:#000;">1</div>
<div class="S " style="left:925.3px;top:776.8px;font-size:19px;line-height:21.22px;color:#000;">Facts_RecordActivity</div>
<div class="S " style="left:1183.3px;top:776.8px;font-size:19px;line-height:21.22px;color:#000;">staging</div>
<div class="S " style="left:1323.3px;top:776.8px;font-size:19px;line-height:21.22px;color:#000;">267620</div>
<div class="S " style="left:1402.3px;top:776.8px;font-size:19px;line-height:21.22px;color:#000;">4016008</div>
<div class="S " style="left:1540.8px;top:776.8px;font-size:19px;line-height:21.22px;color:#000;">3921.88</div>
<div class="S " style="left:1682.8px;top:776.8px;font-size:19px;line-height:21.22px;color:#000;">3912808</div>
<div class="S " style="left:1823.3px;top:776.8px;font-size:19px;line-height:21.22px;color:#000;">3821.10</div>
<div class="S " style="left:1968.3px;top:776.8px;font-size:19px;line-height:21.22px;color:#000;">103200</div>
<div class="S " style="left:2131.3px;top:776.8px;font-size:19px;line-height:21.22px;color:#000;">100.78</div>
<div class="S " style="left:869.3px;top:804.8px;font-size:19px;line-height:21.22px;color:#000;">2</div>
<div class="S " style="left:925.3px;top:804.8px;font-size:19px;line-height:21.22px;color:#000;">Dim_GPS</div>
<div class="S " style="left:1183.3px;top:804.8px;font-size:19px;line-height:21.22px;color:#000;">staging</div>
<div class="S " style="left:1323.3px;top:804.8px;font-size:19px;line-height:21.22px;color:#000;">724</div>
<div class="S " style="left:1402.3px;top:804.8px;font-size:19px;line-height:21.22px;color:#000;">232448</div>
<div class="S " style="left:1540.8px;top:804.8px;font-size:19px;line-height:21.22px;color:#000;">227.00</div>
<div class="S " style="left:1682.8px;top:804.8px;font-size:19px;line-height:21.22px;color:#000;">187520</div>
<div class="S " style="left:1823.3px;top:804.8px;font-size:19px;line-height:21.22px;color:#000;">183.13</div>
<div class="S " style="left:1968.3px;top:804.8px;font-size:19px;line-height:21.22px;color:#000;">44928</div>
<div class="S " style="left:2131.3px;top:804.8px;font-size:19px;line-height:21.22px;color:#000;">43.88</div>
<div class="S " style="left:869.3px;top:832.8px;font-size:19px;line-height:21.22px;color:#000;">3</div>
<div class="S " style="left:925.3px;top:832.8px;font-size:19px;line-height:21.22px;color:#000;">Facts_Actuals_CP</div>
<div class="S " style="left:1183.3px;top:832.8px;font-size:19px;line-height:21.22px;color:#000;">staging</div>
<div class="S " style="left:1323.3px;top:832.8px;font-size:19px;line-height:21.22px;color:#000;">29959</div>
<div class="S " style="left:1402.3px;top:832.8px;font-size:19px;line-height:21.22px;color:#000;">212416</div>
<div class="S " style="left:1540.8px;top:832.8px;font-size:19px;line-height:21.22px;color:#000;">207.44</div>
<div class="S " style="left:1682.8px;top:832.8px;font-size:19px;line-height:21.22px;color:#000;">196896</div>
<div class="S " style="left:1823.3px;top:832.8px;font-size:19px;line-height:21.22px;color:#000;">192.28</div>
<div class="S " style="left:1968.3px;top:832.8px;font-size:19px;line-height:21.22px;color:#000;">15520</div>
<div class="S " style="left:2131.3px;top:832.8px;font-size:19px;line-height:21.22px;color:#000;">15.16</div>
<div class="S " style="left:869.3px;top:860.8px;font-size:19px;line-height:21.22px;color:#000;">4</div>
<div class="S " style="left:925.3px;top:860.8px;font-size:19px;line-height:21.22px;color:#000;">Facts_CostRate</div>
<div class="S " style="left:1183.3px;top:860.8px;font-size:19px;line-height:21.22px;color:#000;">staging</div>
<div class="S " style="left:1323.3px;top:860.8px;font-size:19px;line-height:21.22px;color:#000;">119760</div>
<div class="S " style="left:1402.3px;top:860.8px;font-size:19px;line-height:21.22px;color:#000;">176832</div>
<div class="S " style="left:1540.8px;top:860.8px;font-size:19px;line-height:21.22px;color:#000;">172.69</div>
<div class="S " style="left:1682.8px;top:860.8px;font-size:19px;line-height:21.22px;color:#000;">112096</div>
<div class="S " style="left:1823.3px;top:860.8px;font-size:19px;line-height:21.22px;color:#000;">109.47</div>
<div class="S " style="left:1968.3px;top:860.8px;font-size:19px;line-height:21.22px;color:#000;">64736</div>
<div class="S " style="left:2131.3px;top:860.8px;font-size:19px;line-height:21.22px;color:#000;">63.22</div>
<div class="S " style="left:869.3px;top:888.8px;font-size:19px;line-height:21.22px;color:#000;">5</div>
<div class="S " style="left:925.3px;top:888.8px;font-size:19px;line-height:21.22px;color:#000;">Facts_OB</div>
<div class="S " style="left:1183.3px;top:888.8px;font-size:19px;line-height:21.22px;color:#000;">staging</div>
<div class="S " style="left:1323.3px;top:888.8px;font-size:19px;line-height:21.22px;color:#000;">25748</div>
<div class="S " style="left:1402.3px;top:888.8px;font-size:19px;line-height:21.22px;color:#000;">149504</div>
<div class="S " style="left:1540.8px;top:888.8px;font-size:19px;line-height:21.22px;color:#000;">146.00</div>
<div class="S " style="left:1682.8px;top:888.8px;font-size:19px;line-height:21.22px;color:#000;">138840</div>
<div class="S " style="left:1823.3px;top:888.8px;font-size:19px;line-height:21.22px;color:#000;">135.59</div>
<div class="S " style="left:1968.3px;top:888.8px;font-size:19px;line-height:21.22px;color:#000;">10664</div>
<div class="S " style="left:2131.3px;top:888.8px;font-size:19px;line-height:21.22px;color:#000;">10.41</div>
<div class="S " style="left:869.3px;top:916.8px;font-size:19px;line-height:21.22px;color:#000;">6</div>
<div class="S " style="left:925.3px;top:916.8px;font-size:19px;line-height:21.22px;color:#000;">Facts_SP</div>
<div class="S " style="left:1183.3px;top:916.8px;font-size:19px;line-height:21.22px;color:#000;">staging</div>
<div class="S " style="left:1323.3px;top:916.8px;font-size:19px;line-height:21.22px;color:#000;">0</div>
<div class="S " style="left:1402.3px;top:916.8px;font-size:19px;line-height:21.22px;color:#000;">121840</div>
<div class="S " style="left:1540.8px;top:916.8px;font-size:19px;line-height:21.22px;color:#000;">118.98</div>
<div class="S " style="left:1682.8px;top:916.8px;font-size:19px;line-height:21.22px;color:#000;">114976</div>
<div class="S " style="left:1823.3px;top:916.8px;font-size:19px;line-height:21.22px;color:#000;">112.28</div>
<div class="S " style="left:1968.3px;top:916.8px;font-size:19px;line-height:21.22px;color:#000;">6864</div>
<div class="S " style="left:2131.3px;top:916.8px;font-size:19px;line-height:21.22px;color:#000;">6.70</div>
<div class="S " style="left:869.3px;top:944.8px;font-size:19px;line-height:21.22px;color:#000;">7</div>
<div class="S " style="left:925.3px;top:944.8px;font-size:19px;line-height:21.22px;color:#000;">Facts_OB_GPS</div>
<div class="S " style="left:1183.3px;top:944.8px;font-size:19px;line-height:21.22px;color:#000;">staging</div>
<div class="S " style="left:1323.3px;top:944.8px;font-size:19px;line-height:21.22px;color:#000;">5266</div>
<div class="S " style="left:1402.3px;top:944.8px;font-size:19px;line-height:21.22px;color:#000;">107456</div>
<div class="S " style="left:1540.8px;top:944.8px;font-size:19px;line-height:21.22px;color:#000;">104.94</div>
<div class="S " style="left:1682.8px;top:944.8px;font-size:19px;line-height:21.22px;color:#000;">101312</div>
<div class="S " style="left:1823.3px;top:944.8px;font-size:19px;line-height:21.22px;color:#000;">98.94</div>
<div class="S " style="left:1968.3px;top:944.8px;font-size:19px;line-height:21.22px;color:#000;">6144</div>
<div class="S " style="left:2131.3px;top:944.8px;font-size:19px;line-height:21.22px;color:#000;">6.00</div>
<div class="S " style="left:869.3px;top:972.8px;font-size:19px;line-height:21.22px;color:#000;">8</div>
<div class="S " style="left:925.3px;top:972.8px;font-size:19px;line-height:21.22px;color:#000;">Facts_PlannedWorkingTime</div>
<div class="S " style="left:1183.3px;top:972.8px;font-size:19px;line-height:21.22px;color:#000;">staging</div>
<div class="S " style="left:1323.3px;top:972.8px;font-size:19px;line-height:21.22px;color:#000;">728540</div>
<div class="S " style="left:1402.3px;top:972.8px;font-size:19px;line-height:21.22px;color:#000;">58704</div>
<div class="S " style="left:1540.8px;top:972.8px;font-size:19px;line-height:21.22px;color:#000;">57.33</div>
<div class="S " style="left:1682.8px;top:972.8px;font-size:19px;line-height:21.22px;color:#000;">58512</div>
<div class="S " style="left:1823.3px;top:972.8px;font-size:19px;line-height:21.22px;color:#000;">57.14</div>
<div class="S " style="left:1968.3px;top:972.8px;font-size:19px;line-height:21.22px;color:#000;">192</div>
<div class="S " style="left:2131.3px;top:972.8px;font-size:19px;line-height:21.22px;color:#000;">0.19</div>
<div class="S " style="left:869.3px;top:1000.8px;font-size:19px;line-height:21.22px;color:#000;">9</div>
<div class="S " style="left:925.3px;top:1000.8px;font-size:19px;line-height:21.22px;color:#000;">Facts_Actuals_PM</div>
<div class="S " style="left:1183.3px;top:1000.8px;font-size:19px;line-height:21.22px;color:#000;">staging</div>
<div class="S " style="left:1323.3px;top:1000.8px;font-size:19px;line-height:21.22px;color:#000;">49784</div>
<div class="S " style="left:1402.3px;top:1000.8px;font-size:19px;line-height:21.22px;color:#000;">42688</div>
<div class="S " style="left:1540.8px;top:1000.8px;font-size:19px;line-height:21.22px;color:#000;">41.69</div>
<div class="S " style="left:1682.8px;top:1000.8px;font-size:19px;line-height:21.22px;color:#000;">40016</div>
<div class="S " style="left:1823.3px;top:1000.8px;font-size:19px;line-height:21.22px;color:#000;">39.08</div>
<div class="S " style="left:1968.3px;top:1000.8px;font-size:19px;line-height:21.22px;color:#000;">2672</div>
<div class="S " style="left:2131.3px;top:1000.8px;font-size:19px;line-height:21.22px;color:#000;">2.61</div>
<div class="S " style="left:869.3px;top:1028.8px;font-size:19px;line-height:21.22px;color:#000;">10</div>
<div class="S " style="left:925.3px;top:1028.8px;font-size:19px;line-height:21.22px;color:#000;">Facts_Actuals_PM_GPS</div>
<div class="S " style="left:1183.3px;top:1028.8px;font-size:19px;line-height:21.22px;color:#000;">staging</div>
<div class="S " style="left:1323.3px;top:1028.8px;font-size:19px;line-height:21.22px;color:#000;">41431</div>
<div class="S " style="left:1402.3px;top:1028.8px;font-size:19px;line-height:21.22px;color:#000;">40448</div>
<div class="S " style="left:1540.8px;top:1028.8px;font-size:19px;line-height:21.22px;color:#000;">39.50</div>
<div class="S " style="left:1682.8px;top:1028.8px;font-size:19px;line-height:21.22px;color:#000;">37032</div>
<div class="S " style="left:1823.3px;top:1028.8px;font-size:19px;line-height:21.22px;color:#000;">36.16</div>
<div class="S " style="left:1968.3px;top:1028.8px;font-size:19px;line-height:21.22px;color:#000;">3416</div>
<div class="S " style="left:2131.3px;top:1028.8px;font-size:19px;line-height:21.22px;color:#000;">3.34</div>
<div class="S " style="left:869.3px;top:1056.8px;font-size:19px;line-height:21.22px;color:#000;">11</div>
<div class="S " style="left:925.3px;top:1056.8px;font-size:19px;line-height:21.22px;color:#000;">Facts_BookedTimes</div>
<div class="S " style="left:1183.3px;top:1056.8px;font-size:19px;line-height:21.22px;color:#000;">staging</div>
<div class="S " style="left:1323.3px;top:1056.8px;font-size:19px;line-height:21.22px;color:#000;">91925</div>
<div class="S " style="left:1402.3px;top:1056.8px;font-size:19px;line-height:21.22px;color:#000;">38344</div>
<div class="S " style="left:1540.8px;top:1056.8px;font-size:19px;line-height:21.22px;color:#000;">37.45</div>
<div class="S " style="left:1682.8px;top:1056.8px;font-size:19px;line-height:21.22px;color:#000;">37008</div>
<div class="S " style="left:1823.3px;top:1056.8px;font-size:19px;line-height:21.22px;color:#000;">36.14</div>
<div class="S " style="left:1968.3px;top:1056.8px;font-size:19px;line-height:21.22px;color:#000;">1336</div>
<div class="S " style="left:2131.3px;top:1056.8px;font-size:19px;line-height:21.22px;color:#000;">1.30</div>
<div class="S " style="left:869.3px;top:1084.8px;font-size:19px;line-height:21.22px;color:#000;">12</div>
<div class="S " style="left:925.3px;top:1084.8px;font-size:19px;line-height:21.22px;color:#000;">tbl_Values_PM</div>
<div class="S " style="left:1183.3px;top:1084.8px;font-size:19px;line-height:21.22px;color:#000;">staging</div>
<div class="S " style="left:1323.3px;top:1084.8px;font-size:19px;line-height:21.22px;color:#000;">18963</div>
<div class="S " style="left:1402.3px;top:1084.8px;font-size:19px;line-height:21.22px;color:#000;">37840</div>
<div class="S " style="left:1540.8px;top:1084.8px;font-size:19px;line-height:21.22px;color:#000;">36.95</div>
<div class="S " style="left:1682.8px;top:1084.8px;font-size:19px;line-height:21.22px;color:#000;">35968</div>
<div class="S " style="left:1823.3px;top:1084.8px;font-size:19px;line-height:21.22px;color:#000;">35.13</div>
<div class="S " style="left:1968.3px;top:1084.8px;font-size:19px;line-height:21.22px;color:#000;">1872</div>
<div class="S " style="left:2131.3px;top:1084.8px;font-size:19px;line-height:21.22px;color:#000;">1.83</div>
<div class="S " style="left:869.3px;top:1112.8px;font-size:19px;line-height:21.22px;color:#000;">13</div>
<div class="S " style="left:925.3px;top:1112.8px;font-size:19px;line-height:21.22px;color:#000;">Facts_Forecast_CP</div>
<div class="S " style="left:1183.3px;top:1112.8px;font-size:19px;line-height:21.22px;color:#000;">staging</div>
<div class="S " style="left:1323.3px;top:1112.8px;font-size:19px;line-height:21.22px;color:#000;">6540</div>
<div class="S " style="left:1402.3px;top:1112.8px;font-size:19px;line-height:21.22px;color:#000;">30584</div>
<div class="S " style="left:1540.8px;top:1112.8px;font-size:19px;line-height:21.22px;color:#000;">29.87</div>
<div class="S " style="left:1682.8px;top:1112.8px;font-size:19px;line-height:21.22px;color:#000;">28840</div>
<div class="S " style="left:1823.3px;top:1112.8px;font-size:19px;line-height:21.22px;color:#000;">28.16</div>
<div class="S " style="left:1968.3px;top:1112.8px;font-size:19px;line-height:21.22px;color:#000;">1744</div>
<div class="S " style="left:2131.3px;top:1112.8px;font-size:19px;line-height:21.22px;color:#000;">1.70</div>
<div class="S " style="left:869.3px;top:1140.8px;font-size:19px;line-height:21.22px;color:#000;">14</div>
<div class="S " style="left:925.3px;top:1140.8px;font-size:19px;line-height:21.22px;color:#000;">mqtCP_Import</div>
<div class="S " style="left:1183.3px;top:1140.8px;font-size:19px;line-height:21.22px;color:#000;">staging</div>
<div class="S " style="left:1323.3px;top:1140.8px;font-size:19px;line-height:21.22px;color:#000;">78846</div>
<div class="S " style="left:1402.3px;top:1140.8px;font-size:19px;line-height:21.22px;color:#000;">24136</div>
<div class="S " style="left:1540.8px;top:1140.8px;font-size:19px;line-height:21.22px;color:#000;">23.57</div>
<div class="S " style="left:1682.8px;top:1140.8px;font-size:19px;line-height:21.22px;color:#000;">24048</div>
<div class="S " style="left:1823.3px;top:1140.8px;font-size:19px;line-height:21.22px;color:#000;">23.48</div>
<div class="S " style="left:1968.3px;top:1140.8px;font-size:19px;line-height:21.22px;color:#000;">88</div>
<div class="S " style="left:2131.3px;top:1140.8px;font-size:19px;line-height:21.22px;color:#000;">0.09</div>
<div class="S " style="left:869.3px;top:1168.8px;font-size:19px;line-height:21.22px;color:#000;">15</div>
<div class="S " style="left:925.3px;top:1168.8px;font-size:19px;line-height:21.22px;color:#000;">Facts_Budget_CP</div>
<div class="S " style="left:1183.3px;top:1168.8px;font-size:19px;line-height:21.22px;color:#000;">staging</div>
<div class="S " style="left:1323.3px;top:1168.8px;font-size:19px;line-height:21.22px;color:#000;">5472</div>
<div class="S " style="left:1402.3px;top:1168.8px;font-size:19px;line-height:21.22px;color:#000;">7408</div>
<div class="S " style="left:1540.8px;top:1168.8px;font-size:19px;line-height:21.22px;color:#000;">7.23</div>
<div class="S " style="left:1682.8px;top:1168.8px;font-size:19px;line-height:21.22px;color:#000;">6928</div>
<div class="S " style="left:1823.3px;top:1168.8px;font-size:19px;line-height:21.22px;color:#000;">6.77</div>
<div class="S " style="left:1968.3px;top:1168.8px;font-size:19px;line-height:21.22px;color:#000;">480</div>
<div class="S " style="left:2131.3px;top:1168.8px;font-size:19px;line-height:21.22px;color:#000;">0.47</div>
<div class="S " style="left:869.3px;top:1196.8px;font-size:19px;line-height:21.22px;color:#000;">16</div>
<div class="S " style="left:925.3px;top:1196.8px;font-size:19px;line-height:21.22px;color:#000;">Facts_Actuals2017_CP</div>
<div class="S " style="left:1183.3px;top:1196.8px;font-size:19px;line-height:21.22px;color:#000;">staging</div>
<div class="S " style="left:1323.3px;top:1196.8px;font-size:19px;line-height:21.22px;color:#000;">7728</div>
<div class="S " style="left:1402.3px;top:1196.8px;font-size:19px;line-height:21.22px;color:#000;">4168</div>
<div class="S " style="left:1540.8px;top:1196.8px;font-size:19px;line-height:21.22px;color:#000;">4.07</div>
<div class="S " style="left:1682.8px;top:1196.8px;font-size:19px;line-height:21.22px;color:#000;">4008</div>
<div class="S " style="left:1823.3px;top:1196.8px;font-size:19px;line-height:21.22px;color:#000;">3.91</div>
<div class="S " style="left:1968.3px;top:1196.8px;font-size:19px;line-height:21.22px;color:#000;">160</div>
<div class="S " style="left:2131.3px;top:1196.8px;font-size:19px;line-height:21.22px;color:#000;">0.16</div>
<div class="S " style="left:869.3px;top:1224.8px;font-size:19px;line-height:21.22px;color:#000;">17</div>
<div class="S " style="left:925.3px;top:1224.8px;font-size:19px;line-height:21.22px;color:#000;">Dim_Contract</div>
<div class="S " style="left:1183.3px;top:1224.8px;font-size:19px;line-height:21.22px;color:#000;">staging</div>
<div class="S " style="left:1323.3px;top:1224.8px;font-size:19px;line-height:21.22px;color:#000;">4681</div>
<div class="S " style="left:1402.3px;top:1224.8px;font-size:19px;line-height:21.22px;color:#000;">4032</div>
<div class="S " style="left:1540.8px;top:1224.8px;font-size:19px;line-height:21.22px;color:#000;">3.94</div>
<div class="S " style="left:1682.8px;top:1224.8px;font-size:19px;line-height:21.22px;color:#000;">3192</div>
<div class="S " style="left:1823.3px;top:1224.8px;font-size:19px;line-height:21.22px;color:#000;">3.12</div>
<div class="S " style="left:1968.3px;top:1224.8px;font-size:19px;line-height:21.22px;color:#000;">840</div>
<div class="S " style="left:2131.3px;top:1224.8px;font-size:19px;line-height:21.22px;color:#000;">0.82</div>
<div class="S " style="left:869.3px;top:1252.8px;font-size:19px;line-height:21.22px;color:#000;">18</div>
<div class="S " style="left:925.3px;top:1252.8px;font-size:19px;line-height:21.22px;color:#000;">Dim_Commitment</div>
<div class="S " style="left:1183.3px;top:1252.8px;font-size:19px;line-height:21.22px;color:#000;">staging</div>
<div class="S " style="left:1323.3px;top:1252.8px;font-size:19px;line-height:21.22px;color:#000;">3557</div>
<div class="S " style="left:1402.3px;top:1252.8px;font-size:19px;line-height:21.22px;color:#000;">3592</div>
<div class="S " style="left:1540.8px;top:1252.8px;font-size:19px;line-height:21.22px;color:#000;">3.51</div>
<div class="S " style="left:1682.8px;top:1252.8px;font-size:19px;line-height:21.22px;color:#000;">2240</div>
<div class="S " style="left:1823.3px;top:1252.8px;font-size:19px;line-height:21.22px;color:#000;">2.19</div>
<div class="S " style="left:1968.3px;top:1252.8px;font-size:19px;line-height:21.22px;color:#000;">1352</div>
<div class="S " style="left:2131.3px;top:1252.8px;font-size:19px;line-height:21.22px;color:#000;">1.32</div>
<div class="S " style="left:869.3px;top:1280.8px;font-size:19px;line-height:21.22px;color:#000;">19</div>
<div class="S " style="left:925.3px;top:1280.8px;font-size:19px;line-height:21.22px;color:#000;">Dim_SSP</div>
<div class="S " style="left:1183.3px;top:1280.8px;font-size:19px;line-height:21.22px;color:#000;">staging</div>
<div class="S " style="left:1323.3px;top:1280.8px;font-size:19px;line-height:21.22px;color:#000;">7472</div>
<div class="S " style="left:1402.3px;top:1280.8px;font-size:19px;line-height:21.22px;color:#000;">2624</div>
<div class="S " style="left:1540.8px;top:1280.8px;font-size:19px;line-height:21.22px;color:#000;">2.56</div>
<div class="S " style="left:1682.8px;top:1280.8px;font-size:19px;line-height:21.22px;color:#000;">2232</div>
<div class="S " style="left:1823.3px;top:1280.8px;font-size:19px;line-height:21.22px;color:#000;">2.18</div>
<div class="S " style="left:1968.3px;top:1280.8px;font-size:19px;line-height:21.22px;color:#000;">392</div>
<div class="S " style="left:2131.3px;top:1280.8px;font-size:19px;line-height:21.22px;color:#000;">0.38</div>
<div class="S " style="left:869.3px;top:1308.8px;font-size:19px;line-height:21.22px;color:#000;">20</div>
<div class="S " style="left:925.3px;top:1308.8px;font-size:19px;line-height:21.22px;color:#000;">Dim_Staff</div>
<div class="S " style="left:1183.3px;top:1308.8px;font-size:19px;line-height:21.22px;color:#000;">staging</div>
<div class="S " style="left:1323.3px;top:1308.8px;font-size:19px;line-height:21.22px;color:#000;">1996</div>
<div class="S " style="left:1402.3px;top:1308.8px;font-size:19px;line-height:21.22px;color:#000;">2008</div>
<div class="S " style="left:1540.8px;top:1308.8px;font-size:19px;line-height:21.22px;color:#000;">1.96</div>
<div class="S " style="left:1682.8px;top:1308.8px;font-size:19px;line-height:21.22px;color:#000;">1120</div>
<div class="S " style="left:1823.3px;top:1308.8px;font-size:19px;line-height:21.22px;color:#000;">1.09</div>
<div class="S " style="left:1968.3px;top:1308.8px;font-size:19px;line-height:21.22px;color:#000;">888</div>
<div class="S " style="left:2131.3px;top:1308.8px;font-size:19px;line-height:21.22px;color:#000;">0.87</div>
<div class="S " style="left:869.3px;top:1336.8px;font-size:19px;line-height:21.22px;color:#000;">21</div>
<div class="S " style="left:925.3px;top:1336.8px;font-size:19px;line-height:21.22px;color:#000;">Facts_Actuals2016_CP</div>
<div class="S " style="left:1183.3px;top:1336.8px;font-size:19px;line-height:21.22px;color:#000;">staging</div>
<div class="S " style="left:1323.3px;top:1336.8px;font-size:19px;line-height:21.22px;color:#000;">9107</div>
<div class="S " style="left:1402.3px;top:1336.8px;font-size:19px;line-height:21.22px;color:#000;">1288</div>
<div class="S " style="left:1540.8px;top:1336.8px;font-size:19px;line-height:21.22px;color:#000;">1.26</div>
<div class="S " style="left:1682.8px;top:1336.8px;font-size:19px;line-height:21.22px;color:#000;">1256</div>
<div class="S " style="left:1823.3px;top:1336.8px;font-size:19px;line-height:21.22px;color:#000;">1.23</div>
<div class="S " style="left:1968.3px;top:1336.8px;font-size:19px;line-height:21.22px;color:#000;">32</div>
<div class="S " style="left:2131.3px;top:1336.8px;font-size:19px;line-height:21.22px;color:#000;">0.03</div>
<div class="S " style="left:869.3px;top:1364.8px;font-size:19px;line-height:21.22px;color:#000;">22</div>
<div class="S " style="left:925.3px;top:1364.8px;font-size:19px;line-height:21.22px;color:#000;">Facts_Forecast2017_CP</div>
<div class="S " style="left:1183.3px;top:1364.8px;font-size:19px;line-height:21.22px;color:#000;">staging</div>
<div class="S " style="left:1323.3px;top:1364.8px;font-size:19px;line-height:21.22px;color:#000;">7692</div>
<div class="S " style="left:1402.3px;top:1364.8px;font-size:19px;line-height:21.22px;color:#000;">1096</div>
<div class="S " style="left:1540.8px;top:1364.8px;font-size:19px;line-height:21.22px;color:#000;">1.07</div>
<div class="S " style="left:1682.8px;top:1364.8px;font-size:19px;line-height:21.22px;color:#000;">1080</div>
<div class="S " style="left:1823.3px;top:1364.8px;font-size:19px;line-height:21.22px;color:#000;">1.05</div>
<div class="S " style="left:1968.3px;top:1364.8px;font-size:19px;line-height:21.22px;color:#000;">16</div>
<div class="S " style="left:2131.3px;top:1364.8px;font-size:19px;line-height:21.22px;color:#000;">0.02</div>
<div class="S " style="left:869.3px;top:1392.8px;font-size:19px;line-height:21.22px;color:#000;">23</div>
<div class="S " style="left:925.3px;top:1392.8px;font-size:19px;line-height:21.22px;color:#000;">tbl_Testuser738</div>
<div class="S " style="left:1183.3px;top:1392.8px;font-size:19px;line-height:21.22px;color:#000;">staging</div>
<div class="S " style="left:1323.3px;top:1392.8px;font-size:19px;line-height:21.22px;color:#000;">1996</div>
<div class="S " style="left:1402.3px;top:1392.8px;font-size:19px;line-height:21.22px;color:#000;">1088</div>
<div class="S " style="left:1540.8px;top:1392.8px;font-size:19px;line-height:21.22px;color:#000;">1.06</div>
<div class="S " style="left:1682.8px;top:1392.8px;font-size:19px;line-height:21.22px;color:#000;">664</div>
<div class="S " style="left:1823.3px;top:1392.8px;font-size:19px;line-height:21.22px;color:#000;">0.65</div>
<div class="S " style="left:1968.3px;top:1392.8px;font-size:19px;line-height:21.22px;color:#000;">424</div>
<div class="S " style="left:2131.3px;top:1392.8px;font-size:19px;line-height:21.22px;color:#000;">0.41</div>
<div class="S " style="left:869.3px;top:1420.8px;font-size:19px;line-height:21.22px;color:#000;">24</div>
<div class="S " style="left:925.3px;top:1420.8px;font-size:19px;line-height:21.22px;color:#000;">Facts_Budget2017_CP</div>
<div class="S " style="left:1183.3px;top:1420.8px;font-size:19px;line-height:21.22px;color:#000;">staging</div>
<div class="S " style="left:1323.3px;top:1420.8px;font-size:19px;line-height:21.22px;color:#000;">5964</div>
<div class="S " style="left:1402.3px;top:1420.8px;font-size:19px;line-height:21.22px;color:#000;">840</div>
<div class="S " style="left:1540.8px;top:1420.8px;font-size:19px;line-height:21.22px;color:#000;">0.82</div>
<div class="S " style="left:1682.8px;top:1420.8px;font-size:19px;line-height:21.22px;color:#000;">760</div>
<div class="S " style="left:1823.3px;top:1420.8px;font-size:19px;line-height:21.22px;color:#000;">0.74</div>
<div class="S " style="left:1968.3px;top:1420.8px;font-size:19px;line-height:21.22px;color:#000;">80</div>
<div class="S " style="left:2131.3px;top:1420.8px;font-size:19px;line-height:21.22px;color:#000;">0.08</div>
<div class="S " style="left:869.3px;top:1448.8px;font-size:19px;line-height:21.22px;color:#000;">25</div>
<div class="S " style="left:925.3px;top:1448.8px;font-size:19px;line-height:21.22px;color:#000;">Facts_Salesprice</div>
<div class="S " style="left:1183.3px;top:1448.8px;font-size:19px;line-height:21.22px;color:#000;">staging</div>
<div class="S " style="left:1323.3px;top:1448.8px;font-size:19px;line-height:21.22px;color:#000;">4296</div>
<div class="S " style="left:1402.3px;top:1448.8px;font-size:19px;line-height:21.22px;color:#000;">648</div>
<div class="S " style="left:1540.8px;top:1448.8px;font-size:19px;line-height:21.22px;color:#000;">0.63</div>
<div class="S " style="left:1682.8px;top:1448.8px;font-size:19px;line-height:21.22px;color:#000;">640</div>
<div class="S " style="left:1823.3px;top:1448.8px;font-size:19px;line-height:21.22px;color:#000;">0.63</div>
<div class="S " style="left:1968.3px;top:1448.8px;font-size:19px;line-height:21.22px;color:#000;">8</div>
<div class="S " style="left:2131.3px;top:1448.8px;font-size:19px;line-height:21.22px;color:#000;">0.01</div>
<div class="S " style="left:869.3px;top:1476.8px;font-size:19px;line-height:21.22px;color:#000;">26</div>
<div class="S " style="left:925.3px;top:1476.8px;font-size:19px;line-height:21.22px;color:#000;">Dim_Calendar</div>
<div class="S " style="left:1183.3px;top:1476.8px;font-size:19px;line-height:21.22px;color:#000;">staging</div>
<div class="S " style="left:1323.3px;top:1476.8px;font-size:19px;line-height:21.22px;color:#000;">1826</div>
<div class="S " style="left:1402.3px;top:1476.8px;font-size:19px;line-height:21.22px;color:#000;">488</div>
<div class="S " style="left:1540.8px;top:1476.8px;font-size:19px;line-height:21.22px;color:#000;">0.48</div>
<div class="S " style="left:1682.8px;top:1476.8px;font-size:19px;line-height:21.22px;color:#000;">320</div>
<div class="S " style="left:1823.3px;top:1476.8px;font-size:19px;line-height:21.22px;color:#000;">0.31</div>
<div class="S " style="left:1968.3px;top:1476.8px;font-size:19px;line-height:21.22px;color:#000;">168</div>
<div class="S " style="left:2131.3px;top:1476.8px;font-size:19px;line-height:21.22px;color:#000;">0.16</div>
<div class="S " style="left:869.3px;top:1504.8px;font-size:19px;line-height:21.22px;color:#000;">27</div>
<div class="S " style="left:925.3px;top:1504.8px;font-size:19px;line-height:21.22px;color:#000;">Dim_Final_Customer</div>
<div class="S " style="left:1183.3px;top:1504.8px;font-size:19px;line-height:21.22px;color:#000;">staging</div>
<div class="S " style="left:1323.3px;top:1504.8px;font-size:19px;line-height:21.22px;color:#000;">940</div>
<div class="S " style="left:1402.3px;top:1504.8px;font-size:19px;line-height:21.22px;color:#000;">448</div>
<div class="S " style="left:1540.8px;top:1504.8px;font-size:19px;line-height:21.22px;color:#000;">0.44</div>
<div class="S " style="left:1682.8px;top:1504.8px;font-size:19px;line-height:21.22px;color:#000;">256</div>
<div class="S " style="left:1823.3px;top:1504.8px;font-size:19px;line-height:21.22px;color:#000;">0.25</div>
<div class="S " style="left:1968.3px;top:1504.8px;font-size:19px;line-height:21.22px;color:#000;">192</div>
<div class="S " style="left:2131.3px;top:1504.8px;font-size:19px;line-height:21.22px;color:#000;">0.19</div>
<div class="S " style="left:869.3px;top:1532.8px;font-size:19px;line-height:21.22px;color:#000;">28</div>
<div class="S " style="left:925.3px;top:1532.8px;font-size:19px;line-height:21.22px;color:#000;">Dim_Sector</div>
<div class="S " style="left:1183.3px;top:1532.8px;font-size:19px;line-height:21.22px;color:#000;">staging</div>
<div class="S " style="left:1323.3px;top:1532.8px;font-size:19px;line-height:21.22px;color:#000;">53</div>
<div class="S " style="left:1402.3px;top:1532.8px;font-size:19px;line-height:21.22px;color:#000;">320</div>
<div class="S " style="left:1540.8px;top:1532.8px;font-size:19px;line-height:21.22px;color:#000;">0.31</div>
<div class="S " style="left:1682.8px;top:1532.8px;font-size:19px;line-height:21.22px;color:#000;">152</div>
<div class="S " style="left:1823.3px;top:1532.8px;font-size:19px;line-height:21.22px;color:#000;">0.15</div>
<div class="S " style="left:1968.3px;top:1532.8px;font-size:19px;line-height:21.22px;color:#000;">168</div>
<div class="S " style="left:2131.3px;top:1532.8px;font-size:19px;line-height:21.22px;color:#000;">0.16</div>
<div class="S " style="left:869.3px;top:1560.8px;font-size:19px;line-height:21.22px;color:#000;">29</div>
<div class="S " style="left:925.3px;top:1560.8px;font-size:19px;line-height:21.22px;color:#000;">DIM_Team</div>
<div class="S " style="left:1183.3px;top:1560.8px;font-size:19px;line-height:21.22px;color:#000;">staging</div>
<div class="S " style="left:1323.3px;top:1560.8px;font-size:19px;line-height:21.22px;color:#000;">336</div>
<div class="S " style="left:1402.3px;top:1560.8px;font-size:19px;line-height:21.22px;color:#000;">256</div>
<div class="S " style="left:1540.8px;top:1560.8px;font-size:19px;line-height:21.22px;color:#000;">0.25</div>
<div class="S " style="left:1682.8px;top:1560.8px;font-size:19px;line-height:21.22px;color:#000;">136</div>
<div class="S " style="left:1823.3px;top:1560.8px;font-size:19px;line-height:21.22px;color:#000;">0.13</div>
<div class="S " style="left:1968.3px;top:1560.8px;font-size:19px;line-height:21.22px;color:#000;">120</div>
<div class="S " style="left:2131.3px;top:1560.8px;font-size:19px;line-height:21.22px;color:#000;">0.12</div>
<div class="S " style="left:869.3px;top:1588.8px;font-size:19px;line-height:21.22px;color:#000;">30</div>
<div class="S " style="left:925.3px;top:1588.8px;font-size:19px;line-height:21.22px;color:#000;">Dim_BusinessUnit</div>
<div class="S " style="left:1183.3px;top:1588.8px;font-size:19px;line-height:21.22px;color:#000;">staging</div>
<div class="S " style="left:1323.3px;top:1588.8px;font-size:19px;line-height:21.22px;color:#000;">37</div>
<div class="S " style="left:1402.3px;top:1588.8px;font-size:19px;line-height:21.22px;color:#000;">208</div>
<div class="S " style="left:1540.8px;top:1588.8px;font-size:19px;line-height:21.22px;color:#000;">0.20</div>
<div class="S " style="left:1682.8px;top:1588.8px;font-size:19px;line-height:21.22px;color:#000;">40</div>
<div class="S " style="left:1823.3px;top:1588.8px;font-size:19px;line-height:21.22px;color:#000;">0.04</div>
<div class="S " style="left:1968.3px;top:1588.8px;font-size:19px;line-height:21.22px;color:#000;">168</div>
<div class="S " style="left:2131.3px;top:1588.8px;font-size:19px;line-height:21.22px;color:#000;">0.16</div>
<div class="S " style="left:869.3px;top:1616.8px;font-size:19px;line-height:21.22px;color:#000;">31</div>
<div class="S " style="left:925.3px;top:1616.8px;font-size:19px;line-height:21.22px;color:#000;">DIM_ClientUnit</div>
<div class="S " style="left:1183.3px;top:1616.8px;font-size:19px;line-height:21.22px;color:#000;">staging</div>
<div class="S " style="left:1323.3px;top:1616.8px;font-size:19px;line-height:21.22px;color:#000;">93</div>
<div class="S " style="left:1402.3px;top:1616.8px;font-size:19px;line-height:21.22px;color:#000;">208</div>
<div class="S " style="left:1540.8px;top:1616.8px;font-size:19px;line-height:21.22px;color:#000;">0.20</div>
<div class="S " style="left:1682.8px;top:1616.8px;font-size:19px;line-height:21.22px;color:#000;">40</div>
<div class="S " style="left:1823.3px;top:1616.8px;font-size:19px;line-height:21.22px;color:#000;">0.04</div>
<div class="S " style="left:1968.3px;top:1616.8px;font-size:19px;line-height:21.22px;color:#000;">168</div>
<div class="S " style="left:2131.3px;top:1616.8px;font-size:19px;line-height:21.22px;color:#000;">0.16</div>
<div class="S " style="left:869.3px;top:1644.8px;font-size:19px;line-height:21.22px;color:#000;">32</div>
<div class="S " style="left:925.3px;top:1644.8px;font-size:19px;line-height:21.22px;color:#000;">Dim_PBU</div>
<div class="S " style="left:1183.3px;top:1644.8px;font-size:19px;line-height:21.22px;color:#000;">staging</div>
<div class="S " style="left:1323.3px;top:1644.8px;font-size:19px;line-height:21.22px;color:#000;">42</div>
<div class="S " style="left:1402.3px;top:1644.8px;font-size:19px;line-height:21.22px;color:#000;">200</div>
<div class="S " style="left:1540.8px;top:1644.8px;font-size:19px;line-height:21.22px;color:#000;">0.20</div>
<div class="S " style="left:1682.8px;top:1644.8px;font-size:19px;line-height:21.22px;color:#000;">56</div>
<div class="S " style="left:1823.3px;top:1644.8px;font-size:19px;line-height:21.22px;color:#000;">0.05</div>
<div class="S " style="left:1968.3px;top:1644.8px;font-size:19px;line-height:21.22px;color:#000;">144</div>
<div class="S " style="left:2131.3px;top:1644.8px;font-size:19px;line-height:21.22px;color:#000;">0.14</div>
<div class="S " style="left:869.3px;top:1672.8px;font-size:19px;line-height:21.22px;color:#000;">33</div>
<div class="S " style="left:925.3px;top:1672.8px;font-size:19px;line-height:21.22px;color:#000;">Dim_Opps</div>
<div class="S " style="left:1183.3px;top:1672.8px;font-size:19px;line-height:21.22px;color:#000;">staging</div>
<div class="S " style="left:1323.3px;top:1672.8px;font-size:19px;line-height:21.22px;color:#000;">0</div>
<div class="S " style="left:1402.3px;top:1672.8px;font-size:19px;line-height:21.22px;color:#000;">184</div>
<div class="S " style="left:1540.8px;top:1672.8px;font-size:19px;line-height:21.22px;color:#000;">0.18</div>
<div class="S " style="left:1682.8px;top:1672.8px;font-size:19px;line-height:21.22px;color:#000;">128</div>
<div class="S " style="left:1823.3px;top:1672.8px;font-size:19px;line-height:21.22px;color:#000;">0.13</div>
<div class="S " style="left:1968.3px;top:1672.8px;font-size:19px;line-height:21.22px;color:#000;">56</div>
<div class="S " style="left:2131.3px;top:1672.8px;font-size:19px;line-height:21.22px;color:#000;">0.05</div>
<svg style="left:0;top:0;mix-blend-mode:darken;" width="3543" height="1701"><path d="M1709.8,936.5 C1740,938 1790,946 1850.3,967.5 L1923.3,968.3 L1923.3,987 L1886,990 L1852,991.6 L1805,991.6 C1840,996 1880,999 1928.7,999.4 L1928.7,1016.5 C1880,1016 1830,1010 1769.6,991.6 L1769.6,973 L1810,973 C1790,966 1750,956 1709.8,952.8 Z" fill="#ffe600"/></svg>
<div style="left:2784px;top:746px;width:33px;height:955px;background:#f0f0f0;"></div>
<div style="left:2784px;top:746px;width:33px;height:34px;background:#f7f7f7;"></div>
<svg style="left:2793px;top:760px;" width="16" height="10" viewBox="0 0 16 10"><path d="M1 9L8 2L15 9" fill="none" stroke="#606060" stroke-width="2.4"/></svg>
<div style="left:2784px;top:780px;width:32px;height:747px;background:#cdcdcd;"></div>
<div style="left:2826px;top:67px;width:2px;height:1634px;background:#8e9bbd;"></div>
<div style="left:2828px;top:23px;width:12px;height:1678px;background:linear-gradient(#293955 0px,#293955 60px,#33476a 1000px,#35496c 1678px);"></div>
<div style="left:2840px;top:23px;width:703px;height:1678px;background:#9aa6c8;"></div>
<div style="left:2842px;top:25px;width:701px;height:44px;background:#4d6082;"></div>
<div class="S " style="left:2850.5px;top:36.5px;font-size:24px;line-height:26.81px;color:#ffffff;">Vorlagenbrowser</div>
<div style="left:2842px;top:69px;width:701px;height:52px;background:#cfd6e5;"></div>
<div style="left:2850px;top:73px;width:40px;height:40px;background:#fffcf4;border:2px solid #3d5a8a;"></div>
<svg style="left:2860px;top:81px;" width="26" height="28" viewBox="0 0 26 28"><ellipse cx="13" cy="6" rx="12" ry="5.5" fill="#c9cbdc" stroke="#3a3a3a" stroke-width="2"/><path d="M1 6V22A12 5.5 0 0 0 25 22V6A12 5.5 0 0 1 1 6Z" fill="#3a3a3a"/></svg>
<svg style="left:2903px;top:81px;" width="26" height="29" viewBox="0 0 26 29"><path d="M13 1L25 7V21L13 28L1 21V7Z" fill="#cdd0de" stroke="#3a3a3a" stroke-width="2.2" stroke-linejoin="round"/><path d="M1 7L13 14L25 7M13 14V28" fill="none" stroke="#3a3a3a" stroke-width="2.2"/></svg>
<div style="left:2842px;top:121px;width:701px;height:1px;background:#8c8f99;"></div>
<div style="left:2842px;top:122px;width:701px;height:1337px;background:#ffffff;"></div>
<div style="left:2842px;top:122px;width:1px;height:1579px;background:#999999;"></div>
<div style="left:2853px;top:130.9px;width:16px;height:16px;border:1px solid #a3a3a3;border-radius:2px;background:linear-gradient(#fdfdfd,#e4e4e4);"></div>
<div style="left:2857px;top:138.9px;width:10px;height:2px;background:#36498c;"></div>
<svg style="left:2883.6px;top:128px;" width="27" height="22" viewBox="0 0 27 22"><path d="M0 4Q0 3 1 3H6L9 1Q10 0 11 0H26Q27 0 27 1V21Q27 22 26 22H1Q0 22 0 21Z" fill="#dcb67a"/><path d="M11 2H25V4H11Z" fill="#f3e3c4"/></svg>
<div class="S " style="left:2918.4px;top:128.9px;font-size:23.7px;line-height:26.47px;color:#000000;transform:scaleX(0.9945);transform-origin:0 0;">SQL Server-Vorlagen</div>
<div style="left:2888px;top:164.89999999999998px;width:16px;height:16px;border:1px solid #a3a3a3;border-radius:2px;background:linear-gradient(#fdfdfd,#e4e4e4);"></div>
<div style="left:2892px;top:172.89999999999998px;width:10px;height:2px;background:#36498c;"></div>
<svg style="left:2918.6px;top:162px;" width="27" height="22" viewBox="0 0 27 22"><path d="M0 4Q0 3 1 3H6L9 1Q10 0 11 0H26Q27 0 27 1V21Q27 22 26 22H1Q0 22 0 21Z" fill="#dcb67a"/><path d="M11 2H25V4H11Z" fill="#f3e3c4"/></svg>
<div class="S " style="left:2953.4px;top:162.9px;font-size:23.7px;line-height:26.47px;color:#000000;transform:scaleX(0.9867);transform-origin:0 0;">.OCT Templates</div>
<div style="left:2923px;top:198.89999999999998px;width:16px;height:16px;border:1px solid #a3a3a3;border-radius:2px;background:linear-gradient(#fdfdfd,#e4e4e4);"></div>
<div style="left:2927px;top:206.89999999999998px;width:10px;height:2px;background:#36498c;"></div>
<div style="left:2931px;top:202.89999999999998px;width:2px;height:10px;background:#36498c;"></div>
<svg style="left:2953.6px;top:196px;" width="27" height="22" viewBox="0 0 27 22"><path d="M0 4Q0 3 1 3H6L9 1Q10 0 11 0H26Q27 0 27 1V21Q27 22 26 22H1Q0 22 0 21Z" fill="#dcb67a"/><path d="M11 2H25V4H11Z" fill="#f3e3c4"/></svg>
<div class="S " style="left:2988.4px;top:196.9px;font-size:23.7px;line-height:26.47px;color:#000000;transform:scaleX(0.9904);transform-origin:0 0;">01. Tables</div>
<div style="left:2923px;top:232.89999999999998px;width:16px;height:16px;border:1px solid #a3a3a3;border-radius:2px;background:linear-gradient(#fdfdfd,#e4e4e4);"></div>
<div style="left:2927px;top:240.89999999999998px;width:10px;height:2px;background:#36498c;"></div>
<div style="left:2931px;top:236.89999999999998px;width:2px;height:10px;background:#36498c;"></div>
<svg style="left:2953.6px;top:230px;" width="27" height="22" viewBox="0 0 27 22"><path d="M0 4Q0 3 1 3H6L9 1Q10 0 11 0H26Q27 0 27 1V21Q27 22 26 22H1Q0 22 0 21Z" fill="#dcb67a"/><path d="M11 2H25V4H11Z" fill="#f3e3c4"/></svg>
<div class="S " style="left:2988.4px;top:230.9px;font-size:23.7px;line-height:26.47px;color:#000000;transform:scaleX(0.9667);transform-origin:0 0;">02. Views</div>
<div style="left:2923px;top:266.9px;width:16px;height:16px;border:1px solid #a3a3a3;border-radius:2px;background:linear-gradient(#fdfdfd,#e4e4e4);"></div>
<div style="left:2927px;top:274.9px;width:10px;height:2px;background:#36498c;"></div>
<div style="left:2931px;top:270.9px;width:2px;height:10px;background:#36498c;"></div>
<svg style="left:2953.6px;top:264px;" width="27" height="22" viewBox="0 0 27 22"><path d="M0 4Q0 3 1 3H6L9 1Q10 0 11 0H26Q27 0 27 1V21Q27 22 26 22H1Q0 22 0 21Z" fill="#dcb67a"/><path d="M11 2H25V4H11Z" fill="#f3e3c4"/></svg>
<div class="S " style="left:2988.4px;top:264.9px;font-size:23.7px;line-height:26.47px;color:#000000;transform:scaleX(0.995);transform-origin:0 0;">03. Functions</div>
<div style="left:2923px;top:300.9px;width:16px;height:16px;border:1px solid #a3a3a3;border-radius:2px;background:linear-gradient(#fdfdfd,#e4e4e4);"></div>
<div style="left:2927px;top:308.9px;width:10px;height:2px;background:#36498c;"></div>
<div style="left:2931px;top:304.9px;width:2px;height:10px;background:#36498c;"></div>
<svg style="left:2953.6px;top:298px;" width="27" height="22" viewBox="0 0 27 22"><path d="M0 4Q0 3 1 3H6L9 1Q10 0 11 0H26Q27 0 27 1V21Q27 22 26 22H1Q0 22 0 21Z" fill="#dcb67a"/><path d="M11 2H25V4H11Z" fill="#f3e3c4"/></svg>
<div class="S " style="left:2988.4px;top:298.9px;font-size:23.7px;line-height:26.47px;color:#000000;transform:scaleX(0.9858);transform-origin:0 0;">04. Stored Procedures</div>
<div style="left:2923px;top:334.9px;width:16px;height:16px;border:1px solid #a3a3a3;border-radius:2px;background:linear-gradient(#fdfdfd,#e4e4e4);"></div>
<div style="left:2927px;top:342.9px;width:10px;height:2px;background:#36498c;"></div>
<div style="left:2931px;top:338.9px;width:2px;height:10px;background:#36498c;"></div>
<svg style="left:2953.6px;top:332px;" width="27" height="22" viewBox="0 0 27 22"><path d="M0 4Q0 3 1 3H6L9 1Q10 0 11 0H26Q27 0 27 1V21Q27 22 26 22H1Q0 22 0 21Z" fill="#dcb67a"/><path d="M11 2H25V4H11Z" fill="#f3e3c4"/></svg>
<div class="S " style="left:2988.4px;top:332.9px;font-size:23.7px;line-height:26.47px;color:#000000;transform:scaleX(1.0136);transform-origin:0 0;">05. Trigger</div>
<div style="left:2923px;top:368.9px;width:16px;height:16px;border:1px solid #a3a3a3;border-radius:2px;background:linear-gradient(#fdfdfd,#e4e4e4);"></div>
<div style="left:2927px;top:376.9px;width:10px;height:2px;background:#36498c;"></div>
<div style="left:2931px;top:372.9px;width:2px;height:10px;background:#36498c;"></div>
<svg style="left:2953.6px;top:366px;" width="27" height="22" viewBox="0 0 27 22"><path d="M0 4Q0 3 1 3H6L9 1Q10 0 11 0H26Q27 0 27 1V21Q27 22 26 22H1Q0 22 0 21Z" fill="#dcb67a"/><path d="M11 2H25V4H11Z" fill="#f3e3c4"/></svg>
<div class="S " style="left:2988.4px;top:366.9px;font-size:23.7px;line-height:26.47px;color:#000000;transform:scaleX(1.0063);transform-origin:0 0;">11. Usermanagement</div>
<div style="left:2923px;top:402.9px;width:16px;height:16px;border:1px solid #a3a3a3;border-radius:2px;background:linear-gradient(#fdfdfd,#e4e4e4);"></div>
<div style="left:2927px;top:410.9px;width:10px;height:2px;background:#36498c;"></div>
<div style="left:2931px;top:406.9px;width:2px;height:10px;background:#36498c;"></div>
<svg style="left:2953.6px;top:400px;" width="27" height="22" viewBox="0 0 27 22"><path d="M0 4Q0 3 1 3H6L9 1Q10 0 11 0H26Q27 0 27 1V21Q27 22 26 22H1Q0 22 0 21Z" fill="#dcb67a"/><path d="M11 2H25V4H11Z" fill="#f3e3c4"/></svg>
<div class="S " style="left:2988.4px;top:400.9px;font-size:23.7px;line-height:26.47px;color:#000000;transform:scaleX(1.0018);transform-origin:0 0;">20. Update</div>
<div style="left:2923px;top:436.9px;width:16px;height:16px;border:1px solid #a3a3a3;border-radius:2px;background:linear-gradient(#fdfdfd,#e4e4e4);"></div>
<div style="left:2927px;top:444.9px;width:10px;height:2px;background:#36498c;"></div>
<svg style="left:2953.6px;top:434px;" width="27" height="22" viewBox="0 0 27 22"><path d="M0 4Q0 3 1 3H6L9 1Q10 0 11 0H26Q27 0 27 1V21Q27 22 26 22H1Q0 22 0 21Z" fill="#dcb67a"/><path d="M11 2H25V4H11Z" fill="#f3e3c4"/></svg>
<div class="S " style="left:2988.4px;top:434.9px;font-size:23.7px;line-height:26.47px;color:#000000;transform:scaleX(1.0359);transform-origin:0 0;">90. Toolbox</div>
<svg style="left:2988px;top:462.7px;" width="30" height="32" viewBox="0 0 30 32"><path d="M9.1 3.4H20L26.8 10.2V25H9.1Z" fill="#fff" stroke="#3c3c3c" stroke-width="2"/><path d="M19.6 2.4L27.8 10.6H19.6Z" fill="#3c3c3c"/><path d="M12 10H17.8M12 14H24M12 18H24M12 22H24" stroke="#3c3c3c" stroke-width="1.8"/><path d="M-1 18V32H11V18Z" fill="#fff"/><path d="M0.2 20.5V27.6A4.8 2.6 0 0 0 9.8 27.6V20.5Z" fill="#3c3c3c"/><ellipse cx="5" cy="20.6" rx="4" ry="2" fill="#f0f0f3" stroke="#3c3c3c" stroke-width="1.6"/></svg>
<div class="S " style="left:3023.2px;top:468.9px;font-size:23.7px;line-height:26.47px;color:#000000;transform:scaleX(1.0035);transform-origin:0 0;">GetAllColumnsFromAllObjects</div>
<div style="left:3021px;top:496px;width:522px;height:33px;background:#f0f0f0;"></div>
<svg style="left:2988px;top:496.7px;" width="30" height="32" viewBox="0 0 30 32"><path d="M9.1 3.4H20L26.8 10.2V25H9.1Z" fill="#fff" stroke="#3c3c3c" stroke-width="2"/><path d="M19.6 2.4L27.8 10.6H19.6Z" fill="#3c3c3c"/><path d="M12 10H17.8M12 14H24M12 18H24M12 22H24" stroke="#3c3c3c" stroke-width="1.8"/><path d="M-1 18V32H11V18Z" fill="#fff"/><path d="M0.2 20.5V27.6A4.8 2.6 0 0 0 9.8 27.6V20.5Z" fill="#3c3c3c"/><ellipse cx="5" cy="20.6" rx="4" ry="2" fill="#f0f0f3" stroke="#3c3c3c" stroke-width="1.6"/></svg>
<div class="S " style="left:3023.2px;top:502.9px;font-size:23.7px;line-height:26.47px;color:#000000;transform:scaleX(0.9929);transform-origin:0 0;">GET_AllColumnsFromAllObjects_withObjectRowcount</div>
<svg style="left:2988px;top:530.7px;" width="30" height="32" viewBox="0 0 30 32"><path d="M9.1 3.4H20L26.8 10.2V25H9.1Z" fill="#fff" stroke="#3c3c3c" stroke-width="2"/><path d="M19.6 2.4L27.8 10.6H19.6Z" fill="#3c3c3c"/><path d="M12 10H17.8M12 14H24M12 18H24M12 22H24" stroke="#3c3c3c" stroke-width="1.8"/><path d="M-1 18V32H11V18Z" fill="#fff"/><path d="M0.2 20.5V27.6A4.8 2.6 0 0 0 9.8 27.6V20.5Z" fill="#3c3c3c"/><ellipse cx="5" cy="20.6" rx="4" ry="2" fill="#f0f0f3" stroke="#3c3c3c" stroke-width="1.6"/></svg>
<div class="S " style="left:3023.2px;top:536.9px;font-size:23.7px;line-height:26.47px;color:#000000;transform:scaleX(0.9824);transform-origin:0 0;">GET_CollationOfAllColumns</div>
<svg style="left:2953px;top:564.7px;" width="30" height="32" viewBox="0 0 30 32"><path d="M9.1 3.4H20L26.8 10.2V25H9.1Z" fill="#fff" stroke="#3c3c3c" stroke-width="2"/><path d="M19.6 2.4L27.8 10.6H19.6Z" fill="#3c3c3c"/><path d="M12 10H17.8M12 14H24M12 18H24M12 22H24" stroke="#3c3c3c" stroke-width="1.8"/><path d="M-1 18V32H11V18Z" fill="#fff"/><path d="M0.2 20.5V27.6A4.8 2.6 0 0 0 9.8 27.6V20.5Z" fill="#3c3c3c"/><ellipse cx="5" cy="20.6" rx="4" ry="2" fill="#f0f0f3" stroke="#3c3c3c" stroke-width="1.6"/></svg>
<div class="S " style="left:2988.2px;top:570.9px;font-size:23.7px;line-height:26.47px;color:#000000;transform:scaleX(1.0435);transform-origin:0 0;">HowTo</div>
<div style="left:2888px;top:606.9000000000001px;width:16px;height:16px;border:1px solid #a3a3a3;border-radius:2px;background:linear-gradient(#fdfdfd,#e4e4e4);"></div>
<div style="left:2892px;top:614.9000000000001px;width:10px;height:2px;background:#36498c;"></div>
<div style="left:2896px;top:610.9000000000001px;width:2px;height:10px;background:#36498c;"></div>
<svg style="left:2918.6px;top:604px;" width="27" height="22" viewBox="0 0 27 22"><path d="M0 4Q0 3 1 3H6L9 1Q10 0 11 0H26Q27 0 27 1V21Q27 22 26 22H1Q0 22 0 21Z" fill="#dcb67a"/><path d="M11 2H25V4H11Z" fill="#f3e3c4"/></svg>
<div class="S " style="left:2953.4px;top:604.9px;font-size:23.7px;line-height:26.47px;color:#000000;transform:scaleX(1.0283);transform-origin:0 0;">Aggregate</div>
<div style="left:2888px;top:640.9000000000001px;width:16px;height:16px;border:1px solid #a3a3a3;border-radius:2px;background:linear-gradient(#fdfdfd,#e4e4e4);"></div>
<div style="left:2892px;top:648.9000000000001px;width:10px;height:2px;background:#36498c;"></div>
<div style="left:2896px;top:644.9000000000001px;width:2px;height:10px;background:#36498c;"></div>
<svg style="left:2918.6px;top:638px;" width="27" height="22" viewBox="0 0 27 22"><path d="M0 4Q0 3 1 3H6L9 1Q10 0 11 0H26Q27 0 27 1V21Q27 22 26 22H1Q0 22 0 21Z" fill="#dcb67a"/><path d="M11 2H25V4H11Z" fill="#f3e3c4"/></svg>
<div class="S " style="left:2953.4px;top:638.9px;font-size:23.7px;line-height:26.47px;color:#000000;transform:scaleX(0.9822);transform-origin:0 0;">Assembly</div>
<div style="left:2888px;top:674.9000000000001px;width:16px;height:16px;border:1px solid #a3a3a3;border-radius:2px;background:linear-gradient(#fdfdfd,#e4e4e4);"></div>
<div style="left:2892px;top:682.9000000000001px;width:10px;height:2px;background:#36498c;"></div>
<div style="left:2896px;top:678.9000000000001px;width:2px;height:10px;background:#36498c;"></div>
<svg style="left:2918.6px;top:672px;" width="27" height="22" viewBox="0 0 27 22"><path d="M0 4Q0 3 1 3H6L9 1Q10 0 11 0H26Q27 0 27 1V21Q27 22 26 22H1Q0 22 0 21Z" fill="#dcb67a"/><path d="M11 2H25V4H11Z" fill="#f3e3c4"/></svg>
<div class="S " style="left:2953.4px;top:672.9px;font-size:23.7px;line-height:26.47px;color:#000000;transform:scaleX(1.0692);transform-origin:0 0;">Audit</div>
<div style="left:2888px;top:708.9000000000001px;width:16px;height:16px;border:1px solid #a3a3a3;border-radius:2px;background:linear-gradient(#fdfdfd,#e4e4e4);"></div>
<div style="left:2892px;top:716.9000000000001px;width:10px;height:2px;background:#36498c;"></div>
<div style="left:2896px;top:712.9000000000001px;width:2px;height:10px;background:#36498c;"></div>
<svg style="left:2918.6px;top:706px;" width="27" height="22" viewBox="0 0 27 22"><path d="M0 4Q0 3 1 3H6L9 1Q10 0 11 0H26Q27 0 27 1V21Q27 22 26 22H1Q0 22 0 21Z" fill="#dcb67a"/><path d="M11 2H25V4H11Z" fill="#f3e3c4"/></svg>
<div class="S " style="left:2953.4px;top:706.9px;font-size:23.7px;line-height:26.47px;color:#000000;transform:scaleX(0.9878);transform-origin:0 0;">Backup</div>
<div style="left:2888px;top:742.9000000000001px;width:16px;height:16px;border:1px solid #a3a3a3;border-radius:2px;background:linear-gradient(#fdfdfd,#e4e4e4);"></div>
<div style="left:2892px;top:750.9000000000001px;width:10px;height:2px;background:#36498c;"></div>
<div style="left:2896px;top:746.9000000000001px;width:2px;height:10px;background:#36498c;"></div>
<svg style="left:2918.6px;top:740px;" width="27" height="22" viewBox="0 0 27 22"><path d="M0 4Q0 3 1 3H6L9 1Q10 0 11 0H26Q27 0 27 1V21Q27 22 26 22H1Q0 22 0 21Z" fill="#dcb67a"/><path d="M11 2H25V4H11Z" fill="#f3e3c4"/></svg>
<div class="S " style="left:2953.4px;top:740.9px;font-size:23.7px;line-height:26.47px;color:#000000;transform:scaleX(1.0204);transform-origin:0 0;">Certificate</div>
<div style="left:2888px;top:776.9000000000001px;width:16px;height:16px;border:1px solid #a3a3a3;border-radius:2px;background:linear-gradient(#fdfdfd,#e4e4e4);"></div>
<div style="left:2892px;top:784.9000000000001px;width:10px;height:2px;background:#36498c;"></div>
<div style="left:2896px;top:780.9000000000001px;width:2px;height:10px;background:#36498c;"></div>
<svg style="left:2918.6px;top:774px;" width="27" height="22" viewBox="0 0 27 22"><path d="M0 4Q0 3 1 3H6L9 1Q10 0 11 0H26Q27 0 27 1V21Q27 22 26 22H1Q0 22 0 21Z" fill="#dcb67a"/><path d="M11 2H25V4H11Z" fill="#f3e3c4"/></svg>
<div class="S " style="left:2953.4px;top:774.9px;font-size:23.7px;line-height:26.47px;color:#000000;transform:scaleX(0.9965);transform-origin:0 0;">Change Data Capture</div>
<div style="left:2888px;top:810.9000000000001px;width:16px;height:16px;border:1px solid #a3a3a3;border-radius:2px;background:linear-gradient(#fdfdfd,#e4e4e4);"></div>
<div style="left:2892px;top:818.9000000000001px;width:10px;height:2px;background:#36498c;"></div>
<div style="left:2896px;top:814.9000000000001px;width:2px;height:10px;background:#36498c;"></div>
<svg style="left:2918.6px;top:808px;" width="27" height="22" viewBox="0 0 27 22"><path d="M0 4Q0 3 1 3H6L9 1Q10 0 11 0H26Q27 0 27 1V21Q27 22 26 22H1Q0 22 0 21Z" fill="#dcb67a"/><path d="M11 2H25V4H11Z" fill="#f3e3c4"/></svg>
<div class="S " style="left:2953.4px;top:808.9px;font-size:23.7px;line-height:26.47px;color:#000000;transform:scaleX(1.004);transform-origin:0 0;">Change Tracking</div>
<div style="left:2888px;top:844.9000000000001px;width:16px;height:16px;border:1px solid #a3a3a3;border-radius:2px;background:linear-gradient(#fdfdfd,#e4e4e4);"></div>
<div style="left:2892px;top:852.9000000000001px;width:10px;height:2px;background:#36498c;"></div>
<div style="left:2896px;top:848.9000000000001px;width:2px;height:10px;background:#36498c;"></div>
<svg style="left:2918.6px;top:842px;" width="27" height="22" viewBox="0 0 27 22"><path d="M0 4Q0 3 1 3H6L9 1Q10 0 11 0H26Q27 0 27 1V21Q27 22 26 22H1Q0 22 0 21Z" fill="#dcb67a"/><path d="M11 2H25V4H11Z" fill="#f3e3c4"/></svg>
<div class="S " style="left:2953.4px;top:842.9px;font-size:23.7px;line-height:26.47px;color:#000000;transform:scaleX(1.0144);transform-origin:0 0;">Credential</div>
<div style="left:2888px;top:878.9000000000001px;width:16px;height:16px;border:1px solid #a3a3a3;border-radius:2px;background:linear-gradient(#fdfdfd,#e4e4e4);"></div>
<div style="left:2892px;top:886.9000000000001px;width:10px;height:2px;background:#36498c;"></div>
<div style="left:2896px;top:882.9000000000001px;width:2px;height:10px;background:#36498c;"></div>
<svg style="left:2918.6px;top:876px;" width="27" height="22" viewBox="0 0 27 22"><path d="M0 4Q0 3 1 3H6L9 1Q10 0 11 0H26Q27 0 27 1V21Q27 22 26 22H1Q0 22 0 21Z" fill="#dcb67a"/><path d="M11 2H25V4H11Z" fill="#f3e3c4"/></svg>
<div class="S " style="left:2953.4px;top:876.9px;font-size:23.7px;line-height:26.47px;color:#000000;transform:scaleX(0.9771);transform-origin:0 0;">Database</div>
<div style="left:2888px;top:912.9000000000001px;width:16px;height:16px;border:1px solid #a3a3a3;border-radius:2px;background:linear-gradient(#fdfdfd,#e4e4e4);"></div>
<div style="left:2892px;top:920.9000000000001px;width:10px;height:2px;background:#36498c;"></div>
<div style="left:2896px;top:916.9000000000001px;width:2px;height:10px;background:#36498c;"></div>
<svg style="left:2918.6px;top:910px;" width="27" height="22" viewBox="0 0 27 22"><path d="M0 4Q0 3 1 3H6L9 1Q10 0 11 0H26Q27 0 27 1V21Q27 22 26 22H1Q0 22 0 21Z" fill="#dcb67a"/><path d="M11 2H25V4H11Z" fill="#f3e3c4"/></svg>
<div class="S " style="left:2953.4px;top:910.9px;font-size:23.7px;line-height:26.47px;color:#000000;transform:scaleX(1.0048);transform-origin:0 0;">Database Mail</div>
<div style="left:2888px;top:946.9000000000001px;width:16px;height:16px;border:1px solid #a3a3a3;border-radius:2px;background:linear-gradient(#fdfdfd,#e4e4e4);"></div>
<div style="left:2892px;top:954.9000000000001px;width:10px;height:2px;background:#36498c;"></div>
<div style="left:2896px;top:950.9000000000001px;width:2px;height:10px;background:#36498c;"></div>
<svg style="left:2918.6px;top:944px;" width="27" height="22" viewBox="0 0 27 22"><path d="M0 4Q0 3 1 3H6L9 1Q10 0 11 0H26Q27 0 27 1V21Q27 22 26 22H1Q0 22 0 21Z" fill="#dcb67a"/><path d="M11 2H25V4H11Z" fill="#f3e3c4"/></svg>
<div class="S " style="left:2953.4px;top:944.9px;font-size:23.7px;line-height:26.47px;color:#000000;transform:scaleX(0.973);transform-origin:0 0;">Database Role</div>
<div style="left:2888px;top:980.9000000000001px;width:16px;height:16px;border:1px solid #a3a3a3;border-radius:2px;background:linear-gradient(#fdfdfd,#e4e4e4);"></div>
<div style="left:2892px;top:988.9000000000001px;width:10px;height:2px;background:#36498c;"></div>
<div style="left:2896px;top:984.9000000000001px;width:2px;height:10px;background:#36498c;"></div>
<svg style="left:2918.6px;top:978px;" width="27" height="22" viewBox="0 0 27 22"><path d="M0 4Q0 3 1 3H6L9 1Q10 0 11 0H26Q27 0 27 1V21Q27 22 26 22H1Q0 22 0 21Z" fill="#dcb67a"/><path d="M11 2H25V4H11Z" fill="#f3e3c4"/></svg>
<div class="S " style="left:2953.4px;top:978.9px;font-size:23.7px;line-height:26.47px;color:#000000;transform:scaleX(0.9983);transform-origin:0 0;">Database Trigger</div>
<div style="left:2888px;top:1014.9000000000001px;width:16px;height:16px;border:1px solid #a3a3a3;border-radius:2px;background:linear-gradient(#fdfdfd,#e4e4e4);"></div>
<div style="left:2892px;top:1022.9000000000001px;width:10px;height:2px;background:#36498c;"></div>
<div style="left:2896px;top:1018.9000000000001px;width:2px;height:10px;background:#36498c;"></div>
<svg style="left:2918.6px;top:1012px;" width="27" height="22" viewBox="0 0 27 22"><path d="M0 4Q0 3 1 3H6L9 1Q10 0 11 0H26Q27 0 27 1V21Q27 22 26 22H1Q0 22 0 21Z" fill="#dcb67a"/><path d="M11 2H25V4H11Z" fill="#f3e3c4"/></svg>
<div class="S " style="left:2953.4px;top:1012.9px;font-size:23.7px;line-height:26.47px;color:#000000;transform:scaleX(1.0465);transform-origin:0 0;">Default</div>
<div style="left:2888px;top:1048.9px;width:16px;height:16px;border:1px solid #a3a3a3;border-radius:2px;background:linear-gradient(#fdfdfd,#e4e4e4);"></div>
<div style="left:2892px;top:1056.9px;width:10px;height:2px;background:#36498c;"></div>
<div style="left:2896px;top:1052.9px;width:2px;height:10px;background:#36498c;"></div>
<svg style="left:2918.6px;top:1046px;" width="27" height="22" viewBox="0 0 27 22"><path d="M0 4Q0 3 1 3H6L9 1Q10 0 11 0H26Q27 0 27 1V21Q27 22 26 22H1Q0 22 0 21Z" fill="#dcb67a"/><path d="M11 2H25V4H11Z" fill="#f3e3c4"/></svg>
<div class="S " style="left:2953.4px;top:1046.9px;font-size:23.7px;line-height:26.47px;color:#000000;transform:scaleX(0.9826);transform-origin:0 0;">Earlier Versions</div>
<div style="left:2888px;top:1082.9px;width:16px;height:16px;border:1px solid #a3a3a3;border-radius:2px;background:linear-gradient(#fdfdfd,#e4e4e4);"></div>
<div style="left:2892px;top:1090.9px;width:10px;height:2px;background:#36498c;"></div>
<div style="left:2896px;top:1086.9px;width:2px;height:10px;background:#36498c;"></div>
<svg style="left:2918.6px;top:1080px;" width="27" height="22" viewBox="0 0 27 22"><path d="M0 4Q0 3 1 3H6L9 1Q10 0 11 0H26Q27 0 27 1V21Q27 22 26 22H1Q0 22 0 21Z" fill="#dcb67a"/><path d="M11 2H25V4H11Z" fill="#f3e3c4"/></svg>
<div class="S " style="left:2953.4px;top:1080.9px;font-size:23.7px;line-height:26.47px;color:#000000;transform:scaleX(1.0404);transform-origin:0 0;">Endpoint</div>
<div style="left:2888px;top:1116.9px;width:16px;height:16px;border:1px solid #a3a3a3;border-radius:2px;background:linear-gradient(#fdfdfd,#e4e4e4);"></div>
<div style="left:2892px;top:1124.9px;width:10px;height:2px;background:#36498c;"></div>
<div style="left:2896px;top:1120.9px;width:2px;height:10px;background:#36498c;"></div>
<svg style="left:2918.6px;top:1114px;" width="27" height="22" viewBox="0 0 27 22"><path d="M0 4Q0 3 1 3H6L9 1Q10 0 11 0H26Q27 0 27 1V21Q27 22 26 22H1Q0 22 0 21Z" fill="#dcb67a"/><path d="M11 2H25V4H11Z" fill="#f3e3c4"/></svg>
<div class="S " style="left:2953.4px;top:1114.9px;font-size:23.7px;line-height:26.47px;color:#000000;transform:scaleX(1.0441);transform-origin:0 0;">Event Notification</div>
<div style="left:2888px;top:1150.9px;width:16px;height:16px;border:1px solid #a3a3a3;border-radius:2px;background:linear-gradient(#fdfdfd,#e4e4e4);"></div>
<div style="left:2892px;top:1158.9px;width:10px;height:2px;background:#36498c;"></div>
<div style="left:2896px;top:1154.9px;width:2px;height:10px;background:#36498c;"></div>
<svg style="left:2918.6px;top:1148px;" width="27" height="22" viewBox="0 0 27 22"><path d="M0 4Q0 3 1 3H6L9 1Q10 0 11 0H26Q27 0 27 1V21Q27 22 26 22H1Q0 22 0 21Z" fill="#dcb67a"/><path d="M11 2H25V4H11Z" fill="#f3e3c4"/></svg>
<div class="S " style="left:2953.4px;top:1148.9px;font-size:23.7px;line-height:26.47px;color:#000000;transform:scaleX(1.0026);transform-origin:0 0;">Extended Property</div>
<div style="left:2888px;top:1184.9px;width:16px;height:16px;border:1px solid #a3a3a3;border-radius:2px;background:linear-gradient(#fdfdfd,#e4e4e4);"></div>
<div style="left:2892px;top:1192.9px;width:10px;height:2px;background:#36498c;"></div>
<div style="left:2896px;top:1188.9px;width:2px;height:10px;background:#36498c;"></div>
<svg style="left:2918.6px;top:1182px;" width="27" height="22" viewBox="0 0 27 22"><path d="M0 4Q0 3 1 3H6L9 1Q10 0 11 0H26Q27 0 27 1V21Q27 22 26 22H1Q0 22 0 21Z" fill="#dcb67a"/><path d="M11 2H25V4H11Z" fill="#f3e3c4"/></svg>
<div class="S " style="left:2953.4px;top:1182.9px;font-size:23.7px;line-height:26.47px;color:#000000;transform:scaleX(0.9827);transform-origin:0 0;">External Data Source</div>
<div style="left:2888px;top:1218.9px;width:16px;height:16px;border:1px solid #a3a3a3;border-radius:2px;background:linear-gradient(#fdfdfd,#e4e4e4);"></div>
<div style="left:2892px;top:1226.9px;width:10px;height:2px;background:#36498c;"></div>
<div style="left:2896px;top:1222.9px;width:2px;height:10px;background:#36498c;"></div>
<svg style="left:2918.6px;top:1216px;" width="27" height="22" viewBox="0 0 27 22"><path d="M0 4Q0 3 1 3H6L9 1Q10 0 11 0H26Q27 0 27 1V21Q27 22 26 22H1Q0 22 0 21Z" fill="#dcb67a"/><path d="M11 2H25V4H11Z" fill="#f3e3c4"/></svg>
<div class="S " style="left:2953.4px;top:1216.9px;font-size:23.7px;line-height:26.47px;color:#000000;transform:scaleX(0.9876);transform-origin:0 0;">External File Format</div>
<div style="left:2888px;top:1252.9px;width:16px;height:16px;border:1px solid #a3a3a3;border-radius:2px;background:linear-gradient(#fdfdfd,#e4e4e4);"></div>
<div style="left:2892px;top:1260.9px;width:10px;height:2px;background:#36498c;"></div>
<div style="left:2896px;top:1256.9px;width:2px;height:10px;background:#36498c;"></div>
<svg style="left:2918.6px;top:1250px;" width="27" height="22" viewBox="0 0 27 22"><path d="M0 4Q0 3 1 3H6L9 1Q10 0 11 0H26Q27 0 27 1V21Q27 22 26 22H1Q0 22 0 21Z" fill="#dcb67a"/><path d="M11 2H25V4H11Z" fill="#f3e3c4"/></svg>
<div class="S " style="left:2953.4px;top:1250.9px;font-size:23.7px;line-height:26.47px;color:#000000;transform:scaleX(1.0562);transform-origin:0 0;">Full-text</div>
<div style="left:2888px;top:1286.9px;width:16px;height:16px;border:1px solid #a3a3a3;border-radius:2px;background:linear-gradient(#fdfdfd,#e4e4e4);"></div>
<div style="left:2892px;top:1294.9px;width:10px;height:2px;background:#36498c;"></div>
<div style="left:2896px;top:1290.9px;width:2px;height:10px;background:#36498c;"></div>
<svg style="left:2918.6px;top:1284px;" width="27" height="22" viewBox="0 0 27 22"><path d="M0 4Q0 3 1 3H6L9 1Q10 0 11 0H26Q27 0 27 1V21Q27 22 26 22H1Q0 22 0 21Z" fill="#dcb67a"/><path d="M11 2H25V4H11Z" fill="#f3e3c4"/></svg>
<div class="S " style="left:2953.4px;top:1284.9px;font-size:23.7px;line-height:26.47px;color:#000000;transform:scaleX(1.0349);transform-origin:0 0;">Function</div>
<div style="left:2888px;top:1320.9px;width:16px;height:16px;border:1px solid #a3a3a3;border-radius:2px;background:linear-gradient(#fdfdfd,#e4e4e4);"></div>
<div style="left:2892px;top:1328.9px;width:10px;height:2px;background:#36498c;"></div>
<div style="left:2896px;top:1324.9px;width:2px;height:10px;background:#36498c;"></div>
<svg style="left:2918.6px;top:1318px;" width="27" height="22" viewBox="0 0 27 22"><path d="M0 4Q0 3 1 3H6L9 1Q10 0 11 0H26Q27 0 27 1V21Q27 22 26 22H1Q0 22 0 21Z" fill="#dcb67a"/><path d="M11 2H25V4H11Z" fill="#f3e3c4"/></svg>
<div class="S " style="left:2953.4px;top:1318.9px;font-size:23.7px;line-height:26.47px;color:#000000;transform:scaleX(1.0111);transform-origin:0 0;">Index</div>
<div style="left:2888px;top:1354.9px;width:16px;height:16px;border:1px solid #a3a3a3;border-radius:2px;background:linear-gradient(#fdfdfd,#e4e4e4);"></div>
<div style="left:2892px;top:1362.9px;width:10px;height:2px;background:#36498c;"></div>
<div style="left:2896px;top:1358.9px;width:2px;height:10px;background:#36498c;"></div>
<svg style="left:2918.6px;top:1352px;" width="27" height="22" viewBox="0 0 27 22"><path d="M0 4Q0 3 1 3H6L9 1Q10 0 11 0H26Q27 0 27 1V21Q27 22 26 22H1Q0 22 0 21Z" fill="#dcb67a"/><path d="M11 2H25V4H11Z" fill="#f3e3c4"/></svg>
<div class="S " style="left:2953.4px;top:1352.9px;font-size:23.7px;line-height:26.47px;color:#000000;transform:scaleX(0.9901);transform-origin:0 0;">Linked Server</div>
<div style="left:2888px;top:1388.9px;width:16px;height:16px;border:1px solid #a3a3a3;border-radius:2px;background:linear-gradient(#fdfdfd,#e4e4e4);"></div>
<div style="left:2892px;top:1396.9px;width:10px;height:2px;background:#36498c;"></div>
<div style="left:2896px;top:1392.9px;width:2px;height:10px;background:#36498c;"></div>
<svg style="left:2918.6px;top:1386px;" width="27" height="22" viewBox="0 0 27 22"><path d="M0 4Q0 3 1 3H6L9 1Q10 0 11 0H26Q27 0 27 1V21Q27 22 26 22H1Q0 22 0 21Z" fill="#dcb67a"/><path d="M11 2H25V4H11Z" fill="#f3e3c4"/></svg>
<div class="S " style="left:2953.4px;top:1386.9px;font-size:23.7px;line-height:26.47px;color:#000000;transform:scaleX(1.034);transform-origin:0 0;">Login</div>
<div style="left:2888px;top:1422.9px;width:16px;height:16px;border:1px solid #a3a3a3;border-radius:2px;background:linear-gradient(#fdfdfd,#e4e4e4);"></div>
<div style="left:2892px;top:1430.9px;width:10px;height:2px;background:#36498c;"></div>
<div style="left:2896px;top:1426.9px;width:2px;height:10px;background:#36498c;"></div>
<svg style="left:2918.6px;top:1420px;" width="27" height="22" viewBox="0 0 27 22"><path d="M0 4Q0 3 1 3H6L9 1Q10 0 11 0H26Q27 0 27 1V21Q27 22 26 22H1Q0 22 0 21Z" fill="#dcb67a"/><path d="M11 2H25V4H11Z" fill="#f3e3c4"/></svg>
<div class="S " style="left:2953.4px;top:1420.9px;font-size:23.7px;line-height:26.47px;color:#000000;transform:scaleX(1.0346);transform-origin:0 0;">Partition Function</div>
<div style="left:2888px;top:1456.9px;width:16px;height:16px;border:1px solid #a3a3a3;border-radius:2px;background:linear-gradient(#fdfdfd,#e4e4e4);"></div>
<div style="left:2892px;top:1464.9px;width:10px;height:2px;background:#36498c;"></div>
<div style="left:2896px;top:1460.9px;width:2px;height:10px;background:#36498c;"></div>
<svg style="left:2918.6px;top:1454px;" width="27" height="22" viewBox="0 0 27 22"><path d="M0 4Q0 3 1 3H6L9 1Q10 0 11 0H26Q27 0 27 1V21Q27 22 26 22H1Q0 22 0 21Z" fill="#dcb67a"/><path d="M11 2H25V4H11Z" fill="#f3e3c4"/></svg>
<div class="S " style="left:2953.4px;top:1454.9px;font-size:23.7px;line-height:26.47px;color:#000000;transform:scaleX(1.0);transform-origin:0 0;">Partition Scheme</div>
<div style="left:2842px;top:1459px;width:701px;height:4px;background:#efefef;"></div>
<div style="left:2842px;top:1463px;width:701px;height:1px;background:#8c8c8c;"></div>
<div style="left:2842px;top:1464px;width:701px;height:44px;background:#f0f0f0;"></div>
<div class="S " style="left:2848.8px;top:1474.5px;font-size:23px;line-height:25.69px;color:#000;letter-spacing:0.62px;">Zuletzt verwendete Vorlagen</div>
<div style="left:2842px;top:1508px;width:701px;height:193px;background:#ffffff;"></div>
<div class="S " style="left:2849.0px;top:1516.2px;font-size:23px;line-height:25.69px;color:#0062d0;transform:scaleX(1.0144);transform-origin:0 0;">GET_AllColumnsFromAllObjects_withObjectRowcount</div>
<div class="S " style="left:2849.0px;top:1552.0px;font-size:23px;line-height:25.69px;color:#0062d0;transform:scaleX(0.981);transform-origin:0 0;">CREATE Contained User aus AAD (SSM)</div>
<div class="S " style="left:2849.0px;top:1587.9px;font-size:23px;line-height:25.69px;color:#0062d0;transform:scaleX(0.982);transform-origin:0 0;">CREATE Contained User in DB (SSM)</div>
<div class="S " style="left:2849.0px;top:1623.7px;font-size:23px;line-height:25.69px;color:#0062d0;transform:scaleX(1.0);transform-origin:0 0;">Create Role</div>
<div class="S " style="left:2849.0px;top:1659.6px;font-size:23px;line-height:25.69px;color:#0062d0;transform:scaleX(1.039);transform-origin:0 0;">Create Login</div>
<div class="S " style="left:2849.0px;top:1697.4px;font-size:23px;line-height:25.69px;color:#0062d0;transform:scaleX(0.98);transform-origin:0 0;">CREATE Server User with Login (SSM)</div>
</div></body></html>
